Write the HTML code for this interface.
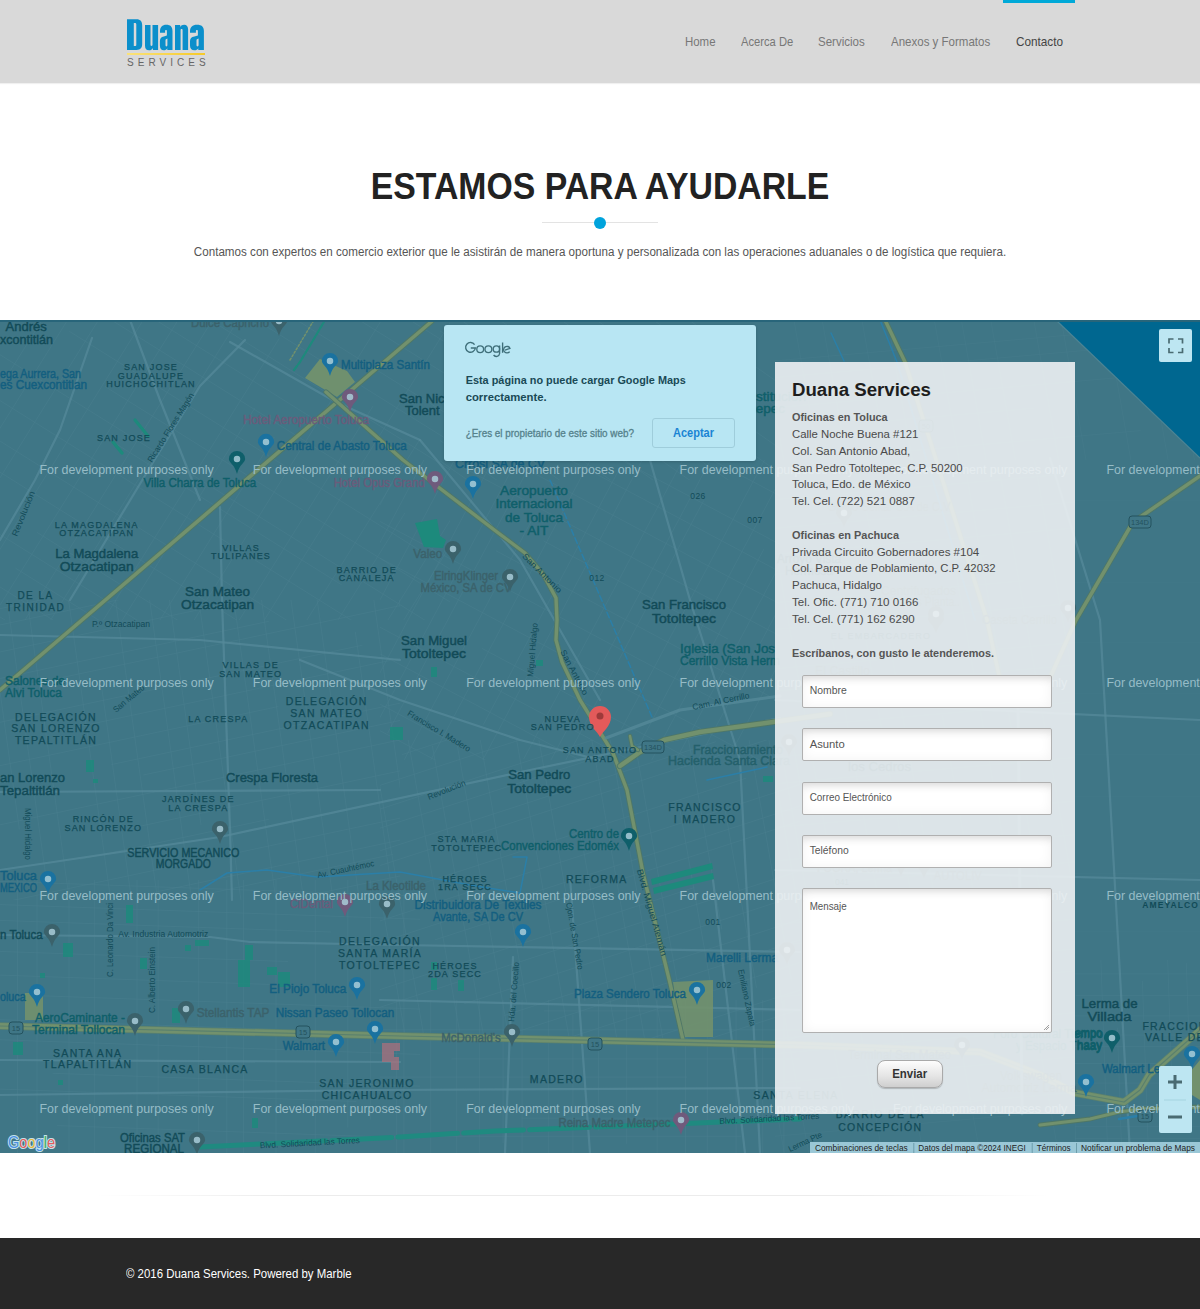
<!DOCTYPE html>
<html><head><meta charset="utf-8">
<style>
*{margin:0;padding:0;box-sizing:border-box}
html,body{width:1200px;height:1309px;overflow:hidden;background:#fff;font-family:"Liberation Sans",sans-serif}
.a{position:absolute;white-space:nowrap}
#hdr{position:absolute;left:0;top:0;width:1200px;height:83px;background:#d9d9d9;box-shadow:0 1px 1px rgba(0,0,0,.06)}
#accent{position:absolute;left:1003px;top:0;width:72px;height:3px;background:#00a9d8}
.logo-line{position:absolute;left:127px;top:53px;width:78px;height:2px;background:linear-gradient(90deg,#fae27a,#f6c928)}
.logo-s{left:127px;top:56.5px;font-size:10px;letter-spacing:4.05px;color:#666}
.nav{top:34px;font-size:13px;color:#777;transform-origin:left top}
#title{left:0;width:1200px;top:166px;transform:scaleX(.938);text-align:center;font-weight:bold;font-size:36px;color:#222}
#sep{position:absolute;left:542px;top:222px;width:116px;height:1px;background:#e3e3e3}
#dot{position:absolute;left:594px;top:217px;width:12px;height:12px;border-radius:50%;background:#00a3dc}
#sub{left:0;width:1200px;top:244.5px;transform:scaleX(.930);text-align:center;font-size:12.5px;color:#555}
#map{position:absolute;left:0;top:320px;width:1200px;height:833px;overflow:hidden}
#dlg{position:absolute;left:444px;top:325px;width:312px;height:136px;background:#b8e6f3;border-radius:3px;box-shadow:0 1px 3px rgba(0,0,0,.15)}
#panel{position:absolute;left:775px;top:362px;width:300px;height:752px;background:rgba(237,241,243,.9)}
.inp{position:absolute;left:802px;width:250px;height:33px;border:1px solid #b0b0b0;border-radius:2px;background:#fff;box-shadow:inset 0 9px 9px -7px rgba(0,0,0,.13),inset 0 0 12px rgba(0,0,0,.05)}
#btn{position:absolute;left:877px;top:1060px;width:66px;height:28px;border-radius:8px;border:1px solid #a9a9a9;background:linear-gradient(#fdfdfd,#e4e4e4 60%,#cfcfcf);box-shadow:0 1px 1px rgba(0,0,0,.2)}
#fs{position:absolute;left:1159px;top:329px;width:33px;height:33px;background:#bde6f2;border-radius:2px}
#zoom{position:absolute;left:1159px;top:1066px;width:33px;height:67px;background:#bde6f2;border-radius:2px}
#attr{position:absolute;left:810px;top:1142px;width:390px;height:11px;background:rgba(170,214,228,.85)}
#footer{position:absolute;left:0;top:1238px;width:1200px;height:71px;background:#282828}
#copy{left:125.5px;top:1266px;font-size:13px;color:#fff;transform:scaleX(.879);transform-origin:left top}
#hr{position:absolute;left:95px;top:1195px;width:955px;height:1px;background:linear-gradient(90deg,rgba(235,235,235,0),#ececec 20%,#ececec 80%,rgba(235,235,235,0))}
svg text{font-family:"Liberation Sans",sans-serif}
</style></head><body>
<div id="hdr"></div>
<div id="accent"></div>
<svg style="position:absolute;left:0;top:0" width="220" height="70" viewBox="0 0 220 70">
<g fill="#0b8fcb">
<path d="M127 19.2h9.5c4 0 5.7 2.2 5.7 6.2v18.4c0 4-1.7 6.2-5.7 6.2H127z M133.8 23v23h1.2c1 0 1.3-.6 1.3-1.6V24.6c0-1-.3-1.6-1.3-1.6z" fill-rule="evenodd"/>
<path d="M145 25h5.5v19.5c0 1 .3 1.4 1 1.4s1-.4 1-1.4V25h5.6v25h-5.2v-2c-.8 1.5-2.2 2.3-3.800 2.3-2.6 0-4.1-1.7-4.1-4.600z"/>
<path d="M160 31.5c0-4.6 2.2-6.8 6.3-6.8s6.2 2 6.2 6.3V50h-5.2v-1.8c-.8 1.4-2 2.1-3.5 2.1-2.6 0-3.9-1.8-3.9-4.8v-4.3c0-2.8 1.2-4.2 3.9-4.8l3.1-.8v-4.4c0-.9-.3-1.3-.9-1.3s-.9.4-.9 1.3v1.6H160z M167.4 38.5l-1 .4c-.7.3-.9.7-.9 1.6v4.6c0 .9.3 1.3.9 1.3s1-.4 1-1.3z" fill-rule="evenodd"/>
<path d="M175 25h5.2v2c.8-1.5 2.2-2.3 3.9-2.3 2.6 0 4 1.7 4 4.6V50h-5.5V30.5c0-1-.3-1.4-1-1.4s-1 .4-1 1.4V50H175z"/>
<path d="M190 31.5c0-4.6 2.4-6.8 7-6.8s6.9 2 6.9 6.3V50h-5.6v-1.8c-.9 1.4-2.200 2.1-3.9 2.1-2.9 0-4.4-1.8-4.4-4.8v-4.3c0-2.8 1.3-4.2 4.4-4.8l3.5-.8v-4.4c0-.9-.3-1.3-1-1.3s-1 .4-1 1.3v1.6H190z M198.600 38.5l-1.1.4c-.8.3-1 .7-1 1.6v4.6c0 .9.3 1.3 1 1.3s1.1-.4 1.1-1.3z" fill-rule="evenodd"/>
</g></svg>
<div class="logo-line"></div>
<div class="a logo-s">SERVICES</div>
<div class="a nav" style="left:684.5px;transform:scaleX(.88)">Home</div>
<div class="a nav" style="left:741px;transform:scaleX(.86)">Acerca De</div>
<div class="a nav" style="left:818.3px;transform:scaleX(.887)">Servicios</div>
<div class="a nav" style="left:891px;transform:scaleX(.886)">Anexos y Formatos</div>
<div class="a nav" style="left:1015.5px;color:#444;transform:scaleX(.904)">Contacto</div>
<div class="a" id="title">ESTAMOS PARA AYUDARLE</div>
<div id="sep"></div><div id="dot"></div>
<div class="a" id="sub">Contamos con expertos en comercio exterior que le asistirán de manera oportuna y personalizada con las operaciones aduanales o de logística que requiera.</div>
<div id="map"><svg width="1200" height="833" viewBox="0 320 1200 833" style="position:absolute;left:0;top:0">
<rect x="0" y="320" width="1200" height="833" fill="#3f7686"/>
<clipPath id="c2"><rect x="0" y="320" width="450" height="300"/></clipPath><g clip-path="url(#c2)">
<line x1="259.9" y1="169.7" x2="513.9" y2="328.4" stroke="#4a7f8f" stroke-width="1" opacity="0.55"/>
<line x1="219.4" y1="175.8" x2="481.1" y2="339.3" stroke="#4a7f8f" stroke-width="1" opacity="0.55"/>
<line x1="192.9" y1="184.4" x2="573.6" y2="422.4" stroke="#4a7f8f" stroke-width="1" opacity="0.55"/>
<line x1="215.9" y1="230.5" x2="559.4" y2="445.1" stroke="#4a7f8f" stroke-width="1" opacity="0.55"/>
<line x1="262.3" y1="298.5" x2="515.9" y2="457.0" stroke="#4a7f8f" stroke-width="1" opacity="0.55"/>
<line x1="93.4" y1="218.3" x2="496.7" y2="470.4" stroke="#4a7f8f" stroke-width="1" opacity="0.55"/>
<line x1="58.9" y1="225.4" x2="517.6" y2="512.0" stroke="#4a7f8f" stroke-width="1" opacity="0.55"/>
<line x1="43.6" y1="250.0" x2="329.7" y2="428.8" stroke="#4a7f8f" stroke-width="1" opacity="0.55"/>
<line x1="31.2" y1="269.9" x2="364.0" y2="477.9" stroke="#4a7f8f" stroke-width="1" opacity="0.55"/>
<line x1="69.3" y1="331.3" x2="472.9" y2="583.5" stroke="#4a7f8f" stroke-width="1" opacity="0.55"/>
<line x1="104.9" y1="386.4" x2="458.2" y2="607.1" stroke="#4a7f8f" stroke-width="1" opacity="0.55"/>
<line x1="-15.7" y1="344.9" x2="439.3" y2="629.2" stroke="#4a7f8f" stroke-width="1" opacity="0.55"/>
<line x1="115.7" y1="443.7" x2="341.7" y2="584.9" stroke="#4a7f8f" stroke-width="1" opacity="0.55"/>
<line x1="-36.3" y1="377.9" x2="422.3" y2="664.5" stroke="#4a7f8f" stroke-width="1" opacity="0.55"/>
<line x1="-54.5" y1="407.0" x2="348.2" y2="658.7" stroke="#4a7f8f" stroke-width="1" opacity="0.55"/>
<line x1="-68.5" y1="429.4" x2="360.8" y2="697.6" stroke="#4a7f8f" stroke-width="1" opacity="0.55"/>
<line x1="36.7" y1="532.2" x2="318.7" y2="708.4" stroke="#4a7f8f" stroke-width="1" opacity="0.55"/>
<line x1="-96.5" y1="474.2" x2="362.2" y2="760.8" stroke="#4a7f8f" stroke-width="1" opacity="0.55"/>
<line x1="15.4" y1="568.1" x2="252.6" y2="716.3" stroke="#4a7f8f" stroke-width="1" opacity="0.55"/>
<line x1="-109.2" y1="518.7" x2="338.6" y2="798.5" stroke="#4a7f8f" stroke-width="1" opacity="0.55"/>
<line x1="-61.8" y1="578.3" x2="325.1" y2="820.1" stroke="#4a7f8f" stroke-width="1" opacity="0.55"/>
</g>
<clipPath id="c25"><rect x="0" y="320" width="450" height="300"/></clipPath><g clip-path="url(#c25)">
<line x1="-91.0" y1="451.2" x2="132.6" y2="93.4" stroke="#4a7f8f" stroke-width="1" opacity="0.55"/>
<line x1="-117.3" y1="575.0" x2="102.3" y2="223.6" stroke="#4a7f8f" stroke-width="1" opacity="0.55"/>
<line x1="-98.9" y1="586.5" x2="187.7" y2="127.8" stroke="#4a7f8f" stroke-width="1" opacity="0.55"/>
<line x1="-50.0" y1="557.8" x2="150.9" y2="236.2" stroke="#4a7f8f" stroke-width="1" opacity="0.55"/>
<line x1="-44.0" y1="619.7" x2="169.8" y2="277.5" stroke="#4a7f8f" stroke-width="1" opacity="0.55"/>
<line x1="-19.4" y1="636.1" x2="267.2" y2="177.5" stroke="#4a7f8f" stroke-width="1" opacity="0.55"/>
<line x1="5.3" y1="651.6" x2="291.9" y2="192.9" stroke="#4a7f8f" stroke-width="1" opacity="0.55"/>
<line x1="23.7" y1="663.1" x2="310.3" y2="204.4" stroke="#4a7f8f" stroke-width="1" opacity="0.55"/>
<line x1="61.6" y1="686.8" x2="279.3" y2="338.4" stroke="#4a7f8f" stroke-width="1" opacity="0.55"/>
<line x1="75.3" y1="695.3" x2="255.0" y2="407.8" stroke="#4a7f8f" stroke-width="1" opacity="0.55"/>
<line x1="141.3" y1="649.8" x2="274.3" y2="437.0" stroke="#4a7f8f" stroke-width="1" opacity="0.55"/>
<line x1="168.6" y1="660.9" x2="399.1" y2="292.0" stroke="#4a7f8f" stroke-width="1" opacity="0.55"/>
<line x1="188.3" y1="701.6" x2="373.1" y2="405.9" stroke="#4a7f8f" stroke-width="1" opacity="0.55"/>
<line x1="177.4" y1="759.1" x2="464.0" y2="300.4" stroke="#4a7f8f" stroke-width="1" opacity="0.55"/>
<line x1="217.9" y1="762.5" x2="419.3" y2="440.2" stroke="#4a7f8f" stroke-width="1" opacity="0.55"/>
<line x1="230.4" y1="792.2" x2="405.0" y2="512.8" stroke="#4a7f8f" stroke-width="1" opacity="0.55"/>
<line x1="266.3" y1="814.7" x2="500.5" y2="439.8" stroke="#4a7f8f" stroke-width="1" opacity="0.55"/>
<line x1="277.7" y1="821.8" x2="564.3" y2="363.1" stroke="#4a7f8f" stroke-width="1" opacity="0.55"/>
<line x1="315.9" y1="845.6" x2="529.9" y2="503.2" stroke="#4a7f8f" stroke-width="1" opacity="0.55"/>
</g>
<clipPath id="c46"><rect x="0" y="600" width="400" height="300"/></clipPath><g clip-path="url(#c46)">
<line x1="-97.4" y1="553.1" x2="391.6" y2="449.2" stroke="#4a7f8f" stroke-width="1" opacity="0.55"/>
<line x1="-47.5" y1="573.3" x2="397.9" y2="478.6" stroke="#4a7f8f" stroke-width="1" opacity="0.55"/>
<line x1="-86.0" y1="606.7" x2="403.0" y2="502.8" stroke="#4a7f8f" stroke-width="1" opacity="0.55"/>
<line x1="-81.9" y1="626.1" x2="312.8" y2="542.2" stroke="#4a7f8f" stroke-width="1" opacity="0.55"/>
<line x1="-73.1" y1="640.5" x2="265.5" y2="568.5" stroke="#4a7f8f" stroke-width="1" opacity="0.55"/>
<line x1="-73.1" y1="667.5" x2="403.6" y2="566.2" stroke="#4a7f8f" stroke-width="1" opacity="0.55"/>
<line x1="-67.7" y1="692.9" x2="268.8" y2="621.3" stroke="#4a7f8f" stroke-width="1" opacity="0.55"/>
<line x1="-25.3" y1="696.1" x2="423.8" y2="600.6" stroke="#4a7f8f" stroke-width="1" opacity="0.55"/>
<line x1="-58.8" y1="734.8" x2="362.4" y2="645.2" stroke="#4a7f8f" stroke-width="1" opacity="0.55"/>
<line x1="74.7" y1="727.5" x2="434.5" y2="651.0" stroke="#4a7f8f" stroke-width="1" opacity="0.55"/>
<line x1="-50.0" y1="776.3" x2="278.4" y2="706.5" stroke="#4a7f8f" stroke-width="1" opacity="0.55"/>
<line x1="111.3" y1="764.6" x2="443.7" y2="693.9" stroke="#4a7f8f" stroke-width="1" opacity="0.55"/>
<line x1="143.3" y1="775.0" x2="447.2" y2="710.4" stroke="#4a7f8f" stroke-width="1" opacity="0.55"/>
<line x1="-8.4" y1="826.6" x2="451.1" y2="729.0" stroke="#4a7f8f" stroke-width="1" opacity="0.55"/>
<line x1="130.1" y1="828.3" x2="457.4" y2="758.7" stroke="#4a7f8f" stroke-width="1" opacity="0.55"/>
<line x1="79.9" y1="859.4" x2="268.8" y2="819.3" stroke="#4a7f8f" stroke-width="1" opacity="0.55"/>
<line x1="-22.0" y1="907.8" x2="467.0" y2="803.9" stroke="#4a7f8f" stroke-width="1" opacity="0.55"/>
<line x1="153.0" y1="892.6" x2="471.5" y2="824.9" stroke="#4a7f8f" stroke-width="1" opacity="0.55"/>
<line x1="42.3" y1="928.9" x2="393.2" y2="854.3" stroke="#4a7f8f" stroke-width="1" opacity="0.55"/>
<line x1="15.4" y1="957.7" x2="478.8" y2="859.2" stroke="#4a7f8f" stroke-width="1" opacity="0.55"/>
<line x1="108.7" y1="961.7" x2="483.6" y2="882.0" stroke="#4a7f8f" stroke-width="1" opacity="0.55"/>
<line x1="-0.7" y1="1008.3" x2="488.4" y2="904.4" stroke="#4a7f8f" stroke-width="1" opacity="0.55"/>
<line x1="4.2" y1="1031.3" x2="383.7" y2="950.6" stroke="#4a7f8f" stroke-width="1" opacity="0.55"/>
</g>
<clipPath id="c71"><rect x="0" y="600" width="400" height="300"/></clipPath><g clip-path="url(#c71)">
<line x1="440.3" y1="625.2" x2="473.0" y2="857.8" stroke="#4a7f8f" stroke-width="1" opacity="0.55"/>
<line x1="381.3" y1="472.1" x2="437.5" y2="871.8" stroke="#4a7f8f" stroke-width="1" opacity="0.55"/>
<line x1="356.4" y1="475.6" x2="413.7" y2="883.6" stroke="#4a7f8f" stroke-width="1" opacity="0.55"/>
<line x1="355.3" y1="631.7" x2="403.4" y2="973.9" stroke="#4a7f8f" stroke-width="1" opacity="0.55"/>
<line x1="300.8" y1="483.4" x2="370.4" y2="978.5" stroke="#4a7f8f" stroke-width="1" opacity="0.55"/>
<line x1="275.1" y1="487.0" x2="344.7" y2="982.1" stroke="#4a7f8f" stroke-width="1" opacity="0.55"/>
<line x1="246.2" y1="491.0" x2="302.8" y2="893.7" stroke="#4a7f8f" stroke-width="1" opacity="0.55"/>
<line x1="219.0" y1="494.9" x2="288.6" y2="990.0" stroke="#4a7f8f" stroke-width="1" opacity="0.55"/>
<line x1="184.7" y1="499.7" x2="242.0" y2="907.6" stroke="#4a7f8f" stroke-width="1" opacity="0.55"/>
<line x1="155.9" y1="503.7" x2="201.0" y2="824.9" stroke="#4a7f8f" stroke-width="1" opacity="0.55"/>
<line x1="143.2" y1="554.1" x2="196.8" y2="936.1" stroke="#4a7f8f" stroke-width="1" opacity="0.55"/>
<line x1="103.0" y1="511.2" x2="164.7" y2="950.1" stroke="#4a7f8f" stroke-width="1" opacity="0.55"/>
<line x1="102.0" y1="689.6" x2="147.0" y2="1009.9" stroke="#4a7f8f" stroke-width="1" opacity="0.55"/>
<line x1="57.0" y1="517.6" x2="112.3" y2="911.2" stroke="#4a7f8f" stroke-width="1" opacity="0.55"/>
<line x1="16.4" y1="523.3" x2="70.2" y2="905.9" stroke="#4a7f8f" stroke-width="1" opacity="0.55"/>
<line x1="2.1" y1="564.9" x2="58.5" y2="966.2" stroke="#4a7f8f" stroke-width="1" opacity="0.55"/>
<line x1="-22.9" y1="528.9" x2="19.4" y2="829.5" stroke="#4a7f8f" stroke-width="1" opacity="0.55"/>
<line x1="-55.8" y1="533.5" x2="13.8" y2="1028.6" stroke="#4a7f8f" stroke-width="1" opacity="0.55"/>
</g>
<clipPath id="c91"><rect x="0" y="880" width="420" height="273"/></clipPath><g clip-path="url(#c91)">
<line x1="-31.4" y1="751.2" x2="469.3" y2="768.7" stroke="#4a7f8f" stroke-width="1" opacity="0.55"/>
<line x1="20.5" y1="790.1" x2="423.7" y2="804.2" stroke="#4a7f8f" stroke-width="1" opacity="0.55"/>
<line x1="51.4" y1="805.1" x2="467.5" y2="819.6" stroke="#4a7f8f" stroke-width="1" opacity="0.55"/>
<line x1="-4.3" y1="835.0" x2="466.4" y2="851.5" stroke="#4a7f8f" stroke-width="1" opacity="0.55"/>
<line x1="-35.0" y1="854.4" x2="276.9" y2="865.3" stroke="#4a7f8f" stroke-width="1" opacity="0.55"/>
<line x1="-21.4" y1="880.6" x2="464.8" y2="897.6" stroke="#4a7f8f" stroke-width="1" opacity="0.55"/>
<line x1="-36.7" y1="903.3" x2="435.2" y2="919.8" stroke="#4a7f8f" stroke-width="1" opacity="0.55"/>
<line x1="-37.2" y1="919.1" x2="331.1" y2="932.0" stroke="#4a7f8f" stroke-width="1" opacity="0.55"/>
<line x1="-38.3" y1="950.1" x2="288.0" y2="961.5" stroke="#4a7f8f" stroke-width="1" opacity="0.55"/>
<line x1="-17.2" y1="974.5" x2="271.3" y2="984.5" stroke="#4a7f8f" stroke-width="1" opacity="0.55"/>
<line x1="21.3" y1="995.1" x2="460.8" y2="1010.5" stroke="#4a7f8f" stroke-width="1" opacity="0.55"/>
<line x1="-40.7" y1="1018.3" x2="329.2" y2="1031.2" stroke="#4a7f8f" stroke-width="1" opacity="0.55"/>
<line x1="-38.3" y1="1038.4" x2="459.2" y2="1055.8" stroke="#4a7f8f" stroke-width="1" opacity="0.55"/>
<line x1="52.6" y1="1073.3" x2="458.1" y2="1087.5" stroke="#4a7f8f" stroke-width="1" opacity="0.55"/>
<line x1="-43.1" y1="1087.6" x2="356.4" y2="1101.5" stroke="#4a7f8f" stroke-width="1" opacity="0.55"/>
<line x1="57.2" y1="1125.6" x2="456.3" y2="1139.5" stroke="#4a7f8f" stroke-width="1" opacity="0.55"/>
<line x1="121.5" y1="1154.0" x2="455.4" y2="1165.6" stroke="#4a7f8f" stroke-width="1" opacity="0.55"/>
<line x1="23.7" y1="1169.6" x2="280.5" y2="1178.6" stroke="#4a7f8f" stroke-width="1" opacity="0.55"/>
<line x1="-46.4" y1="1183.0" x2="286.6" y2="1194.6" stroke="#4a7f8f" stroke-width="1" opacity="0.55"/>
<line x1="-47.3" y1="1207.2" x2="453.3" y2="1224.7" stroke="#4a7f8f" stroke-width="1" opacity="0.55"/>
<line x1="0.1" y1="1241.3" x2="344.0" y2="1253.3" stroke="#4a7f8f" stroke-width="1" opacity="0.55"/>
</g>
<clipPath id="c114"><rect x="0" y="880" width="420" height="273"/></clipPath><g clip-path="url(#c114)">
<line x1="466.6" y1="818.8" x2="466.6" y2="1267.0" stroke="#4a7f8f" stroke-width="1" opacity="0.55"/>
<line x1="422.0" y1="766.0" x2="422.0" y2="1260.1" stroke="#4a7f8f" stroke-width="1" opacity="0.55"/>
<line x1="403.9" y1="766.3" x2="403.9" y2="1161.7" stroke="#4a7f8f" stroke-width="1" opacity="0.55"/>
<line x1="370.4" y1="867.2" x2="370.4" y2="1119.5" stroke="#4a7f8f" stroke-width="1" opacity="0.55"/>
<line x1="347.8" y1="774.4" x2="347.8" y2="1127.6" stroke="#4a7f8f" stroke-width="1" opacity="0.55"/>
<line x1="315.3" y1="766.0" x2="315.3" y2="1267.0" stroke="#4a7f8f" stroke-width="1" opacity="0.55"/>
<line x1="276.0" y1="766.0" x2="276.0" y2="1267.0" stroke="#4a7f8f" stroke-width="1" opacity="0.55"/>
<line x1="243.6" y1="831.4" x2="243.6" y2="1267.0" stroke="#4a7f8f" stroke-width="1" opacity="0.55"/>
<line x1="226.8" y1="766.0" x2="226.8" y2="1267.0" stroke="#4a7f8f" stroke-width="1" opacity="0.55"/>
<line x1="198.7" y1="766.0" x2="198.7" y2="1267.0" stroke="#4a7f8f" stroke-width="1" opacity="0.55"/>
<line x1="158.2" y1="766.0" x2="158.2" y2="1267.0" stroke="#4a7f8f" stroke-width="1" opacity="0.55"/>
<line x1="137.0" y1="766.0" x2="137.0" y2="1267.0" stroke="#4a7f8f" stroke-width="1" opacity="0.55"/>
<line x1="94.4" y1="766.0" x2="94.4" y2="1267.0" stroke="#4a7f8f" stroke-width="1" opacity="0.55"/>
<line x1="69.0" y1="766.0" x2="69.0" y2="1267.0" stroke="#4a7f8f" stroke-width="1" opacity="0.55"/>
<line x1="37.0" y1="772.3" x2="37.0" y2="1138.9" stroke="#4a7f8f" stroke-width="1" opacity="0.55"/>
<line x1="17.6" y1="766.0" x2="17.6" y2="1267.0" stroke="#4a7f8f" stroke-width="1" opacity="0.55"/>
<line x1="-21.8" y1="766.0" x2="-21.8" y2="1267.0" stroke="#4a7f8f" stroke-width="1" opacity="0.55"/>
</g>
<clipPath id="c133"><rect x="380" y="460" width="400" height="300"/></clipPath><g clip-path="url(#c133)">
<line x1="316.7" y1="572.4" x2="476.5" y2="271.8" stroke="#4a7f8f" stroke-width="1" opacity="0.55"/>
<line x1="263.1" y1="724.7" x2="497.9" y2="283.2" stroke="#4a7f8f" stroke-width="1" opacity="0.55"/>
<line x1="278.8" y1="733.0" x2="426.6" y2="454.9" stroke="#4a7f8f" stroke-width="1" opacity="0.55"/>
<line x1="302.5" y1="745.6" x2="512.8" y2="350.1" stroke="#4a7f8f" stroke-width="1" opacity="0.55"/>
<line x1="368.6" y1="694.1" x2="537.7" y2="376.0" stroke="#4a7f8f" stroke-width="1" opacity="0.55"/>
<line x1="351.2" y1="771.5" x2="586.0" y2="330.0" stroke="#4a7f8f" stroke-width="1" opacity="0.55"/>
<line x1="387.5" y1="733.3" x2="598.4" y2="336.6" stroke="#4a7f8f" stroke-width="1" opacity="0.55"/>
<line x1="387.7" y1="790.9" x2="534.3" y2="515.3" stroke="#4a7f8f" stroke-width="1" opacity="0.55"/>
<line x1="408.5" y1="801.9" x2="643.2" y2="360.5" stroke="#4a7f8f" stroke-width="1" opacity="0.55"/>
<line x1="483.3" y1="724.7" x2="619.5" y2="468.7" stroke="#4a7f8f" stroke-width="1" opacity="0.55"/>
<line x1="449.0" y1="823.5" x2="681.6" y2="385.9" stroke="#4a7f8f" stroke-width="1" opacity="0.55"/>
<line x1="523.6" y1="759.2" x2="715.3" y2="398.8" stroke="#4a7f8f" stroke-width="1" opacity="0.55"/>
<line x1="527.4" y1="804.3" x2="731.8" y2="419.9" stroke="#4a7f8f" stroke-width="1" opacity="0.55"/>
<line x1="513.7" y1="857.9" x2="703.7" y2="500.5" stroke="#4a7f8f" stroke-width="1" opacity="0.55"/>
<line x1="621.3" y1="729.3" x2="779.1" y2="432.7" stroke="#4a7f8f" stroke-width="1" opacity="0.55"/>
<line x1="564.7" y1="885.0" x2="789.8" y2="461.6" stroke="#4a7f8f" stroke-width="1" opacity="0.55"/>
<line x1="581.1" y1="892.9" x2="763.9" y2="549.1" stroke="#4a7f8f" stroke-width="1" opacity="0.55"/>
<line x1="631.9" y1="842.8" x2="819.4" y2="490.3" stroke="#4a7f8f" stroke-width="1" opacity="0.55"/>
<line x1="617.0" y1="912.8" x2="851.7" y2="471.3" stroke="#4a7f8f" stroke-width="1" opacity="0.55"/>
<line x1="639.7" y1="924.9" x2="874.4" y2="483.4" stroke="#4a7f8f" stroke-width="1" opacity="0.55"/>
<line x1="705.8" y1="875.7" x2="905.4" y2="500.2" stroke="#4a7f8f" stroke-width="1" opacity="0.55"/>
</g>
<clipPath id="c156"><rect x="380" y="460" width="400" height="300"/></clipPath><g clip-path="url(#c156)">
<line x1="551.5" y1="313.5" x2="749.3" y2="418.7" stroke="#4a7f8f" stroke-width="1" opacity="0.55"/>
<line x1="465.9" y1="292.1" x2="896.0" y2="520.7" stroke="#4a7f8f" stroke-width="1" opacity="0.55"/>
<line x1="540.8" y1="368.9" x2="781.4" y2="496.8" stroke="#4a7f8f" stroke-width="1" opacity="0.55"/>
<line x1="430.5" y1="358.6" x2="872.0" y2="593.3" stroke="#4a7f8f" stroke-width="1" opacity="0.55"/>
<line x1="419.2" y1="379.9" x2="860.7" y2="614.7" stroke="#4a7f8f" stroke-width="1" opacity="0.55"/>
<line x1="405.8" y1="405.1" x2="800.0" y2="614.7" stroke="#4a7f8f" stroke-width="1" opacity="0.55"/>
<line x1="392.5" y1="430.0" x2="834.0" y2="664.8" stroke="#4a7f8f" stroke-width="1" opacity="0.55"/>
<line x1="543.5" y1="540.9" x2="728.1" y2="639.1" stroke="#4a7f8f" stroke-width="1" opacity="0.55"/>
<line x1="495.8" y1="550.7" x2="806.8" y2="716.1" stroke="#4a7f8f" stroke-width="1" opacity="0.55"/>
<line x1="351.9" y1="506.5" x2="715.2" y2="699.7" stroke="#4a7f8f" stroke-width="1" opacity="0.55"/>
<line x1="365.2" y1="550.3" x2="761.5" y2="761.0" stroke="#4a7f8f" stroke-width="1" opacity="0.55"/>
<line x1="481.8" y1="648.3" x2="763.2" y2="798.0" stroke="#4a7f8f" stroke-width="1" opacity="0.55"/>
<line x1="342.0" y1="607.0" x2="633.3" y2="761.9" stroke="#4a7f8f" stroke-width="1" opacity="0.55"/>
<line x1="342.6" y1="634.0" x2="738.5" y2="844.5" stroke="#4a7f8f" stroke-width="1" opacity="0.55"/>
<line x1="276.2" y1="648.9" x2="614.2" y2="828.6" stroke="#4a7f8f" stroke-width="1" opacity="0.55"/>
<line x1="324.9" y1="701.4" x2="579.1" y2="836.5" stroke="#4a7f8f" stroke-width="1" opacity="0.55"/>
<line x1="336.2" y1="750.4" x2="688.8" y2="937.9" stroke="#4a7f8f" stroke-width="1" opacity="0.55"/>
</g>
<clipPath id="c175"><rect x="380" y="740" width="420" height="300"/></clipPath><g clip-path="url(#c175)">
<line x1="319.5" y1="711.6" x2="639.3" y2="607.7" stroke="#4a7f8f" stroke-width="1" opacity="0.55"/>
<line x1="271.4" y1="744.6" x2="762.3" y2="585.1" stroke="#4a7f8f" stroke-width="1" opacity="0.55"/>
<line x1="286.3" y1="768.8" x2="770.8" y2="611.3" stroke="#4a7f8f" stroke-width="1" opacity="0.55"/>
<line x1="402.1" y1="754.6" x2="658.2" y2="671.4" stroke="#4a7f8f" stroke-width="1" opacity="0.55"/>
<line x1="293.7" y1="813.4" x2="784.6" y2="653.9" stroke="#4a7f8f" stroke-width="1" opacity="0.55"/>
<line x1="322.1" y1="827.9" x2="697.8" y2="705.8" stroke="#4a7f8f" stroke-width="1" opacity="0.55"/>
<line x1="306.3" y1="852.1" x2="797.2" y2="692.6" stroke="#4a7f8f" stroke-width="1" opacity="0.55"/>
<line x1="313.0" y1="872.6" x2="715.8" y2="741.7" stroke="#4a7f8f" stroke-width="1" opacity="0.55"/>
<line x1="317.3" y1="885.9" x2="792.5" y2="731.5" stroke="#4a7f8f" stroke-width="1" opacity="0.55"/>
<line x1="351.7" y1="906.3" x2="746.1" y2="778.2" stroke="#4a7f8f" stroke-width="1" opacity="0.55"/>
<line x1="347.4" y1="931.5" x2="824.5" y2="776.5" stroke="#4a7f8f" stroke-width="1" opacity="0.55"/>
<line x1="383.8" y1="941.2" x2="830.8" y2="796.0" stroke="#4a7f8f" stroke-width="1" opacity="0.55"/>
<line x1="434.9" y1="939.9" x2="835.3" y2="809.7" stroke="#4a7f8f" stroke-width="1" opacity="0.55"/>
<line x1="353.8" y1="998.1" x2="694.4" y2="887.5" stroke="#4a7f8f" stroke-width="1" opacity="0.55"/>
<line x1="359.0" y1="1014.1" x2="849.8" y2="854.6" stroke="#4a7f8f" stroke-width="1" opacity="0.55"/>
<line x1="463.8" y1="1003.9" x2="856.9" y2="876.2" stroke="#4a7f8f" stroke-width="1" opacity="0.55"/>
<line x1="504.3" y1="1015.5" x2="864.1" y2="898.6" stroke="#4a7f8f" stroke-width="1" opacity="0.55"/>
<line x1="445.6" y1="1055.0" x2="807.8" y2="937.3" stroke="#4a7f8f" stroke-width="1" opacity="0.55"/>
<line x1="386.0" y1="1097.1" x2="876.8" y2="937.6" stroke="#4a7f8f" stroke-width="1" opacity="0.55"/>
<line x1="584.4" y1="1060.0" x2="849.5" y2="973.9" stroke="#4a7f8f" stroke-width="1" opacity="0.55"/>
<line x1="549.0" y1="1090.9" x2="881.1" y2="983.0" stroke="#4a7f8f" stroke-width="1" opacity="0.55"/>
<line x1="451.4" y1="1149.4" x2="832.7" y2="1025.5" stroke="#4a7f8f" stroke-width="1" opacity="0.55"/>
<line x1="493.5" y1="1165.2" x2="902.0" y2="1032.4" stroke="#4a7f8f" stroke-width="1" opacity="0.55"/>
<line x1="431.5" y1="1197.2" x2="890.6" y2="1048.0" stroke="#4a7f8f" stroke-width="1" opacity="0.55"/>
</g>
<clipPath id="c201"><rect x="380" y="740" width="420" height="300"/></clipPath><g clip-path="url(#c201)">
<line x1="793.4" y1="592.1" x2="883.1" y2="1100.4" stroke="#4a7f8f" stroke-width="1" opacity="0.55"/>
<line x1="773.8" y1="634.4" x2="856.7" y2="1105.0" stroke="#4a7f8f" stroke-width="1" opacity="0.55"/>
<line x1="768.2" y1="735.8" x2="811.5" y2="981.7" stroke="#4a7f8f" stroke-width="1" opacity="0.55"/>
<line x1="725.2" y1="604.7" x2="791.5" y2="980.6" stroke="#4a7f8f" stroke-width="1" opacity="0.55"/>
<line x1="724.5" y1="806.4" x2="756.5" y2="987.8" stroke="#4a7f8f" stroke-width="1" opacity="0.55"/>
<line x1="666.4" y1="614.5" x2="721.9" y2="929.5" stroke="#4a7f8f" stroke-width="1" opacity="0.55"/>
<line x1="679.1" y1="805.0" x2="712.9" y2="997.1" stroke="#4a7f8f" stroke-width="1" opacity="0.55"/>
<line x1="628.7" y1="707.2" x2="703.6" y2="1132.0" stroke="#4a7f8f" stroke-width="1" opacity="0.55"/>
<line x1="591.6" y1="635.0" x2="677.2" y2="1119.9" stroke="#4a7f8f" stroke-width="1" opacity="0.55"/>
<line x1="572.6" y1="631.0" x2="662.3" y2="1139.3" stroke="#4a7f8f" stroke-width="1" opacity="0.55"/>
<line x1="580.1" y1="830.5" x2="635.4" y2="1144.0" stroke="#4a7f8f" stroke-width="1" opacity="0.55"/>
<line x1="521.3" y1="640.1" x2="585.0" y2="1001.1" stroke="#4a7f8f" stroke-width="1" opacity="0.55"/>
<line x1="499.7" y1="643.9" x2="589.3" y2="1152.2" stroke="#4a7f8f" stroke-width="1" opacity="0.55"/>
<line x1="464.4" y1="650.1" x2="526.6" y2="1002.6" stroke="#4a7f8f" stroke-width="1" opacity="0.55"/>
<line x1="441.2" y1="654.2" x2="530.9" y2="1162.5" stroke="#4a7f8f" stroke-width="1" opacity="0.55"/>
<line x1="432.4" y1="745.9" x2="504.1" y2="1152.1" stroke="#4a7f8f" stroke-width="1" opacity="0.55"/>
<line x1="394.5" y1="662.4" x2="484.2" y2="1170.7" stroke="#4a7f8f" stroke-width="1" opacity="0.55"/>
<line x1="359.1" y1="668.7" x2="448.7" y2="1177.0" stroke="#4a7f8f" stroke-width="1" opacity="0.55"/>
<line x1="354.1" y1="745.4" x2="430.7" y2="1180.1" stroke="#4a7f8f" stroke-width="1" opacity="0.55"/>
<line x1="346.3" y1="828.8" x2="375.4" y2="993.8" stroke="#4a7f8f" stroke-width="1" opacity="0.55"/>
</g>
<clipPath id="c223"><rect x="380" y="1000" width="420" height="153"/></clipPath><g clip-path="url(#c223)">
<line x1="366.5" y1="847.4" x2="810.0" y2="847.4" stroke="#4a7f8f" stroke-width="1" opacity="0.55"/>
<line x1="366.5" y1="877.6" x2="649.7" y2="877.6" stroke="#4a7f8f" stroke-width="1" opacity="0.55"/>
<line x1="493.4" y1="888.2" x2="676.6" y2="888.2" stroke="#4a7f8f" stroke-width="1" opacity="0.55"/>
<line x1="366.5" y1="912.0" x2="813.5" y2="912.0" stroke="#4a7f8f" stroke-width="1" opacity="0.55"/>
<line x1="366.5" y1="936.0" x2="813.5" y2="936.0" stroke="#4a7f8f" stroke-width="1" opacity="0.55"/>
<line x1="366.5" y1="948.5" x2="736.1" y2="948.5" stroke="#4a7f8f" stroke-width="1" opacity="0.55"/>
<line x1="366.5" y1="971.5" x2="678.9" y2="971.5" stroke="#4a7f8f" stroke-width="1" opacity="0.55"/>
<line x1="524.6" y1="989.9" x2="813.5" y2="989.9" stroke="#4a7f8f" stroke-width="1" opacity="0.55"/>
<line x1="543.9" y1="1010.9" x2="813.5" y2="1010.9" stroke="#4a7f8f" stroke-width="1" opacity="0.55"/>
<line x1="366.5" y1="1029.8" x2="813.5" y2="1029.8" stroke="#4a7f8f" stroke-width="1" opacity="0.55"/>
<line x1="451.4" y1="1058.9" x2="813.5" y2="1058.9" stroke="#4a7f8f" stroke-width="1" opacity="0.55"/>
<line x1="366.5" y1="1077.1" x2="687.2" y2="1077.1" stroke="#4a7f8f" stroke-width="1" opacity="0.55"/>
<line x1="540.5" y1="1088.4" x2="813.5" y2="1088.4" stroke="#4a7f8f" stroke-width="1" opacity="0.55"/>
<line x1="521.4" y1="1118.2" x2="681.2" y2="1118.2" stroke="#4a7f8f" stroke-width="1" opacity="0.55"/>
<line x1="366.5" y1="1136.3" x2="741.3" y2="1136.3" stroke="#4a7f8f" stroke-width="1" opacity="0.55"/>
<line x1="432.4" y1="1154.4" x2="671.2" y2="1154.4" stroke="#4a7f8f" stroke-width="1" opacity="0.55"/>
<line x1="366.5" y1="1170.1" x2="813.5" y2="1170.1" stroke="#4a7f8f" stroke-width="1" opacity="0.55"/>
<line x1="425.0" y1="1189.4" x2="813.5" y2="1189.4" stroke="#4a7f8f" stroke-width="1" opacity="0.55"/>
<line x1="402.9" y1="1209.2" x2="813.5" y2="1209.2" stroke="#4a7f8f" stroke-width="1" opacity="0.55"/>
<line x1="384.6" y1="1233.6" x2="733.1" y2="1233.6" stroke="#4a7f8f" stroke-width="1" opacity="0.55"/>
<line x1="395.8" y1="1254.7" x2="813.5" y2="1254.7" stroke="#4a7f8f" stroke-width="1" opacity="0.55"/>
<line x1="421.5" y1="1271.9" x2="813.5" y2="1271.9" stroke="#4a7f8f" stroke-width="1" opacity="0.55"/>
<line x1="366.5" y1="1290.7" x2="709.2" y2="1290.7" stroke="#4a7f8f" stroke-width="1" opacity="0.55"/>
</g>
<clipPath id="c248"><rect x="380" y="1000" width="420" height="153"/></clipPath><g clip-path="url(#c248)">
<line x1="807.8" y1="853.0" x2="807.8" y2="1156.5" stroke="#4a7f8f" stroke-width="1" opacity="0.55"/>
<line x1="783.9" y1="854.1" x2="783.9" y2="1300.0" stroke="#4a7f8f" stroke-width="1" opacity="0.55"/>
<line x1="762.7" y1="853.0" x2="762.7" y2="1279.1" stroke="#4a7f8f" stroke-width="1" opacity="0.55"/>
<line x1="736.1" y1="855.7" x2="736.1" y2="1300.0" stroke="#4a7f8f" stroke-width="1" opacity="0.55"/>
<line x1="707.3" y1="853.0" x2="707.3" y2="1232.4" stroke="#4a7f8f" stroke-width="1" opacity="0.55"/>
<line x1="685.5" y1="853.0" x2="685.5" y2="1171.9" stroke="#4a7f8f" stroke-width="1" opacity="0.55"/>
<line x1="657.2" y1="853.0" x2="657.2" y2="1208.9" stroke="#4a7f8f" stroke-width="1" opacity="0.55"/>
<line x1="626.7" y1="853.0" x2="626.7" y2="1143.8" stroke="#4a7f8f" stroke-width="1" opacity="0.55"/>
<line x1="598.6" y1="853.0" x2="598.6" y2="1130.7" stroke="#4a7f8f" stroke-width="1" opacity="0.55"/>
<line x1="572.9" y1="1014.7" x2="572.9" y2="1300.0" stroke="#4a7f8f" stroke-width="1" opacity="0.55"/>
<line x1="548.4" y1="993.5" x2="548.4" y2="1193.5" stroke="#4a7f8f" stroke-width="1" opacity="0.55"/>
<line x1="522.1" y1="853.0" x2="522.1" y2="1160.2" stroke="#4a7f8f" stroke-width="1" opacity="0.55"/>
<line x1="503.1" y1="853.0" x2="503.1" y2="1143.2" stroke="#4a7f8f" stroke-width="1" opacity="0.55"/>
<line x1="479.4" y1="853.0" x2="479.4" y2="1300.0" stroke="#4a7f8f" stroke-width="1" opacity="0.55"/>
<line x1="456.7" y1="853.0" x2="456.7" y2="1300.0" stroke="#4a7f8f" stroke-width="1" opacity="0.55"/>
<line x1="430.7" y1="853.0" x2="430.7" y2="1228.4" stroke="#4a7f8f" stroke-width="1" opacity="0.55"/>
<line x1="396.7" y1="853.0" x2="396.7" y2="1196.3" stroke="#4a7f8f" stroke-width="1" opacity="0.55"/>
<line x1="370.2" y1="970.8" x2="370.2" y2="1199.6" stroke="#4a7f8f" stroke-width="1" opacity="0.55"/>
</g>
<clipPath id="c268"><rect x="440" y="320" width="340" height="160"/></clipPath><g clip-path="url(#c268)">
<line x1="568.1" y1="132.2" x2="781.8" y2="281.8" stroke="#4a7f8f" stroke-width="1" opacity="0.55"/>
<line x1="546.6" y1="163.0" x2="753.4" y2="307.8" stroke="#4a7f8f" stroke-width="1" opacity="0.55"/>
<line x1="550.1" y1="191.7" x2="730.3" y2="317.8" stroke="#4a7f8f" stroke-width="1" opacity="0.55"/>
<line x1="519.6" y1="201.5" x2="782.7" y2="385.7" stroke="#4a7f8f" stroke-width="1" opacity="0.55"/>
<line x1="507.9" y1="218.2" x2="815.8" y2="433.7" stroke="#4a7f8f" stroke-width="1" opacity="0.55"/>
<line x1="551.2" y1="288.4" x2="791.0" y2="456.3" stroke="#4a7f8f" stroke-width="1" opacity="0.55"/>
<line x1="477.6" y1="261.5" x2="785.4" y2="477.0" stroke="#4a7f8f" stroke-width="1" opacity="0.55"/>
<line x1="457.4" y1="290.4" x2="763.0" y2="504.3" stroke="#4a7f8f" stroke-width="1" opacity="0.55"/>
<line x1="444.6" y1="308.6" x2="752.4" y2="524.1" stroke="#4a7f8f" stroke-width="1" opacity="0.55"/>
<line x1="432.6" y1="325.7" x2="740.4" y2="541.3" stroke="#4a7f8f" stroke-width="1" opacity="0.55"/>
<line x1="511.7" y1="410.9" x2="713.7" y2="552.4" stroke="#4a7f8f" stroke-width="1" opacity="0.55"/>
<line x1="401.8" y1="369.7" x2="648.4" y2="542.3" stroke="#4a7f8f" stroke-width="1" opacity="0.55"/>
<line x1="413.5" y1="421.9" x2="689.0" y2="614.8" stroke="#4a7f8f" stroke-width="1" opacity="0.55"/>
<line x1="394.0" y1="428.6" x2="671.6" y2="622.9" stroke="#4a7f8f" stroke-width="1" opacity="0.55"/>
<line x1="353.5" y1="438.8" x2="634.8" y2="635.8" stroke="#4a7f8f" stroke-width="1" opacity="0.55"/>
</g>
<clipPath id="c285"><rect x="775" y="320" width="425" height="140"/></clipPath><g clip-path="url(#c285)">
<line x1="744.6" y1="180.2" x2="1190.3" y2="141.2" stroke="#4a7f8f" stroke-width="1" opacity="0.35"/>
<line x1="747.4" y1="212.2" x2="1193.1" y2="173.2" stroke="#4a7f8f" stroke-width="1" opacity="0.35"/>
<line x1="750.1" y1="243.7" x2="1194.6" y2="204.9" stroke="#4a7f8f" stroke-width="1" opacity="0.35"/>
<line x1="894.9" y1="260.0" x2="1196.7" y2="233.6" stroke="#4a7f8f" stroke-width="1" opacity="0.35"/>
<line x1="891.3" y1="287.6" x2="1054.0" y2="273.3" stroke="#4a7f8f" stroke-width="1" opacity="0.35"/>
<line x1="903.9" y1="317.4" x2="1139.1" y2="296.8" stroke="#4a7f8f" stroke-width="1" opacity="0.35"/>
<line x1="760.5" y1="362.1" x2="1206.2" y2="323.1" stroke="#4a7f8f" stroke-width="1" opacity="0.35"/>
<line x1="768.0" y1="378.2" x2="1139.2" y2="345.7" stroke="#4a7f8f" stroke-width="1" opacity="0.35"/>
<line x1="764.5" y1="408.6" x2="1210.3" y2="369.6" stroke="#4a7f8f" stroke-width="1" opacity="0.35"/>
<line x1="883.0" y1="421.3" x2="1034.5" y2="408.1" stroke="#4a7f8f" stroke-width="1" opacity="0.35"/>
<line x1="833.0" y1="457.6" x2="1140.8" y2="430.6" stroke="#4a7f8f" stroke-width="1" opacity="0.35"/>
<line x1="883.3" y1="485.2" x2="1063.6" y2="469.4" stroke="#4a7f8f" stroke-width="1" opacity="0.35"/>
<line x1="801.7" y1="526.3" x2="1156.3" y2="495.3" stroke="#4a7f8f" stroke-width="1" opacity="0.35"/>
<line x1="777.4" y1="555.4" x2="1092.0" y2="527.9" stroke="#4a7f8f" stroke-width="1" opacity="0.35"/>
<line x1="778.6" y1="569.0" x2="1224.3" y2="530.0" stroke="#4a7f8f" stroke-width="1" opacity="0.35"/>
<line x1="781.5" y1="602.5" x2="1216.1" y2="564.5" stroke="#4a7f8f" stroke-width="1" opacity="0.35"/>
</g>
<clipPath id="c303"><rect x="775" y="320" width="425" height="140"/></clipPath><g clip-path="url(#c303)">
<line x1="1192.4" y1="290.9" x2="1227.4" y2="489.7" stroke="#4a7f8f" stroke-width="1" opacity="0.35"/>
<line x1="1139.2" y1="146.7" x2="1215.1" y2="577.1" stroke="#4a7f8f" stroke-width="1" opacity="0.35"/>
<line x1="1111.8" y1="140.9" x2="1189.5" y2="581.6" stroke="#4a7f8f" stroke-width="1" opacity="0.35"/>
<line x1="1094.6" y1="254.4" x2="1153.4" y2="587.9" stroke="#4a7f8f" stroke-width="1" opacity="0.35"/>
<line x1="1032.2" y1="154.9" x2="1088.4" y2="473.9" stroke="#4a7f8f" stroke-width="1" opacity="0.35"/>
<line x1="1033.2" y1="316.4" x2="1083.3" y2="600.3" stroke="#4a7f8f" stroke-width="1" opacity="0.35"/>
<line x1="990.0" y1="315.8" x2="1041.5" y2="607.7" stroke="#4a7f8f" stroke-width="1" opacity="0.35"/>
<line x1="935.3" y1="172.0" x2="988.9" y2="476.2" stroke="#4a7f8f" stroke-width="1" opacity="0.35"/>
<line x1="910.3" y1="183.5" x2="979.0" y2="573.2" stroke="#4a7f8f" stroke-width="1" opacity="0.35"/>
<line x1="863.7" y1="184.6" x2="941.4" y2="625.3" stroke="#4a7f8f" stroke-width="1" opacity="0.35"/>
<line x1="838.8" y1="189.0" x2="910.0" y2="592.4" stroke="#4a7f8f" stroke-width="1" opacity="0.35"/>
<line x1="820.2" y1="309.0" x2="877.9" y2="636.5" stroke="#4a7f8f" stroke-width="1" opacity="0.35"/>
<line x1="772.9" y1="200.7" x2="827.6" y2="511.0" stroke="#4a7f8f" stroke-width="1" opacity="0.35"/>
<line x1="739.0" y1="206.6" x2="816.7" y2="647.3" stroke="#4a7f8f" stroke-width="1" opacity="0.35"/>
</g>
<clipPath id="c319"><rect x="775" y="460" width="300" height="693"/></clipPath><g clip-path="url(#c319)">
<line x1="781.2" y1="444.2" x2="1039.6" y2="421.6" stroke="#4a7f8f" stroke-width="1" opacity="0.35"/>
<line x1="519.0" y1="498.0" x2="1271.3" y2="432.2" stroke="#4a7f8f" stroke-width="1" opacity="0.35"/>
<line x1="521.1" y1="521.8" x2="1225.1" y2="460.2" stroke="#4a7f8f" stroke-width="1" opacity="0.35"/>
<line x1="523.6" y1="550.3" x2="1193.0" y2="491.7" stroke="#4a7f8f" stroke-width="1" opacity="0.35"/>
<line x1="589.6" y1="570.4" x2="1278.1" y2="510.2" stroke="#4a7f8f" stroke-width="1" opacity="0.35"/>
<line x1="527.5" y1="595.7" x2="987.0" y2="555.5" stroke="#4a7f8f" stroke-width="1" opacity="0.35"/>
<line x1="530.0" y1="624.0" x2="1024.1" y2="580.8" stroke="#4a7f8f" stroke-width="1" opacity="0.35"/>
<line x1="740.8" y1="632.4" x2="1284.6" y2="584.8" stroke="#4a7f8f" stroke-width="1" opacity="0.35"/>
<line x1="535.8" y1="689.7" x2="1164.8" y2="634.7" stroke="#4a7f8f" stroke-width="1" opacity="0.35"/>
<line x1="537.7" y1="712.0" x2="1290.0" y2="646.2" stroke="#4a7f8f" stroke-width="1" opacity="0.35"/>
<line x1="802.1" y1="725.9" x2="1293.2" y2="682.9" stroke="#4a7f8f" stroke-width="1" opacity="0.35"/>
<line x1="605.4" y1="772.1" x2="1005.2" y2="737.1" stroke="#4a7f8f" stroke-width="1" opacity="0.35"/>
<line x1="545.7" y1="803.8" x2="1298.0" y2="738.0" stroke="#4a7f8f" stroke-width="1" opacity="0.35"/>
<line x1="548.2" y1="831.3" x2="1029.6" y2="789.2" stroke="#4a7f8f" stroke-width="1" opacity="0.35"/>
<line x1="549.5" y1="847.0" x2="1096.9" y2="799.2" stroke="#4a7f8f" stroke-width="1" opacity="0.35"/>
<line x1="629.7" y1="873.6" x2="1219.2" y2="822.1" stroke="#4a7f8f" stroke-width="1" opacity="0.35"/>
<line x1="844.9" y1="882.0" x2="1307.1" y2="841.5" stroke="#4a7f8f" stroke-width="1" opacity="0.35"/>
<line x1="558.0" y1="943.3" x2="1133.6" y2="893.0" stroke="#4a7f8f" stroke-width="1" opacity="0.35"/>
<line x1="559.8" y1="964.3" x2="1223.2" y2="906.2" stroke="#4a7f8f" stroke-width="1" opacity="0.35"/>
<line x1="821.8" y1="971.2" x2="1260.4" y2="932.8" stroke="#4a7f8f" stroke-width="1" opacity="0.35"/>
<line x1="625.1" y1="1010.3" x2="1316.6" y2="949.8" stroke="#4a7f8f" stroke-width="1" opacity="0.35"/>
<line x1="715.6" y1="1044.1" x2="1259.0" y2="996.6" stroke="#4a7f8f" stroke-width="1" opacity="0.35"/>
<line x1="673.7" y1="1062.5" x2="1321.5" y2="1005.8" stroke="#4a7f8f" stroke-width="1" opacity="0.35"/>
<line x1="571.7" y1="1100.8" x2="1087.7" y2="1055.7" stroke="#4a7f8f" stroke-width="1" opacity="0.35"/>
<line x1="607.9" y1="1133.2" x2="1327.1" y2="1070.2" stroke="#4a7f8f" stroke-width="1" opacity="0.35"/>
<line x1="576.4" y1="1153.6" x2="1328.6" y2="1087.8" stroke="#4a7f8f" stroke-width="1" opacity="0.35"/>
<line x1="579.8" y1="1193.3" x2="1151.9" y2="1143.2" stroke="#4a7f8f" stroke-width="1" opacity="0.35"/>
</g>
<clipPath id="c348"><rect x="775" y="460" width="300" height="693"/></clipPath><g clip-path="url(#c348)">
<line x1="1233.4" y1="368.7" x2="1358.7" y2="1079.2" stroke="#4a7f8f" stroke-width="1" opacity="0.35"/>
<line x1="1221.1" y1="451.6" x2="1338.5" y2="1117.0" stroke="#4a7f8f" stroke-width="1" opacity="0.35"/>
<line x1="1210.6" y1="643.9" x2="1267.1" y2="964.2" stroke="#4a7f8f" stroke-width="1" opacity="0.35"/>
<line x1="1130.2" y1="386.9" x2="1261.3" y2="1130.6" stroke="#4a7f8f" stroke-width="1" opacity="0.35"/>
<line x1="1111.5" y1="490.4" x2="1217.3" y2="1090.2" stroke="#4a7f8f" stroke-width="1" opacity="0.35"/>
<line x1="1060.6" y1="399.2" x2="1162.3" y2="975.9" stroke="#4a7f8f" stroke-width="1" opacity="0.35"/>
<line x1="1024.9" y1="405.5" x2="1127.8" y2="989.1" stroke="#4a7f8f" stroke-width="1" opacity="0.35"/>
<line x1="999.2" y1="468.8" x2="1104.7" y2="1067.2" stroke="#4a7f8f" stroke-width="1" opacity="0.35"/>
<line x1="964.7" y1="463.9" x2="1052.3" y2="960.9" stroke="#4a7f8f" stroke-width="1" opacity="0.35"/>
<line x1="946.7" y1="519.9" x2="1059.3" y2="1158.6" stroke="#4a7f8f" stroke-width="1" opacity="0.35"/>
<line x1="942.3" y1="715.2" x2="990.7" y2="989.5" stroke="#4a7f8f" stroke-width="1" opacity="0.35"/>
<line x1="853.2" y1="435.8" x2="984.4" y2="1179.4" stroke="#4a7f8f" stroke-width="1" opacity="0.35"/>
<line x1="864.2" y1="629.5" x2="920.3" y2="947.3" stroke="#4a7f8f" stroke-width="1" opacity="0.35"/>
<line x1="819.2" y1="564.2" x2="929.4" y2="1189.1" stroke="#4a7f8f" stroke-width="1" opacity="0.35"/>
<line x1="758.6" y1="452.4" x2="889.7" y2="1196.1" stroke="#4a7f8f" stroke-width="1" opacity="0.35"/>
<line x1="761.4" y1="637.1" x2="847.3" y2="1124.1" stroke="#4a7f8f" stroke-width="1" opacity="0.35"/>
<line x1="717.4" y1="635.7" x2="818.5" y2="1208.7" stroke="#4a7f8f" stroke-width="1" opacity="0.35"/>
<line x1="701.5" y1="684.0" x2="794.8" y2="1212.9" stroke="#4a7f8f" stroke-width="1" opacity="0.35"/>
<line x1="623.1" y1="476.3" x2="754.2" y2="1220.0" stroke="#4a7f8f" stroke-width="1" opacity="0.35"/>
<line x1="591.5" y1="481.9" x2="686.6" y2="1021.2" stroke="#4a7f8f" stroke-width="1" opacity="0.35"/>
<line x1="581.0" y1="612.4" x2="690.2" y2="1231.3" stroke="#4a7f8f" stroke-width="1" opacity="0.35"/>
<line x1="523.8" y1="493.8" x2="624.7" y2="1066.0" stroke="#4a7f8f" stroke-width="1" opacity="0.35"/>
<line x1="495.5" y1="498.8" x2="609.6" y2="1145.9" stroke="#4a7f8f" stroke-width="1" opacity="0.35"/>
</g>
<clipPath id="c373"><rect x="1075" y="960" width="125" height="193"/></clipPath><g clip-path="url(#c373)">
<line x1="1082.7" y1="946.2" x2="1252.5" y2="946.2" stroke="#4a7f8f" stroke-width="1" opacity="0.45"/>
<line x1="1112.2" y1="958.3" x2="1210.5" y2="958.3" stroke="#4a7f8f" stroke-width="1" opacity="0.45"/>
<line x1="1022.5" y1="973.9" x2="1252.5" y2="973.9" stroke="#4a7f8f" stroke-width="1" opacity="0.45"/>
<line x1="1075.4" y1="995.7" x2="1252.5" y2="995.7" stroke="#4a7f8f" stroke-width="1" opacity="0.45"/>
<line x1="1022.5" y1="1015.9" x2="1252.5" y2="1015.9" stroke="#4a7f8f" stroke-width="1" opacity="0.45"/>
<line x1="1022.5" y1="1035.1" x2="1247.7" y2="1035.1" stroke="#4a7f8f" stroke-width="1" opacity="0.45"/>
<line x1="1022.5" y1="1046.4" x2="1230.6" y2="1046.4" stroke="#4a7f8f" stroke-width="1" opacity="0.45"/>
<line x1="1022.5" y1="1063.5" x2="1165.7" y2="1063.5" stroke="#4a7f8f" stroke-width="1" opacity="0.45"/>
<line x1="1023.8" y1="1083.1" x2="1199.2" y2="1083.1" stroke="#4a7f8f" stroke-width="1" opacity="0.45"/>
<line x1="1046.9" y1="1105.7" x2="1228.7" y2="1105.7" stroke="#4a7f8f" stroke-width="1" opacity="0.45"/>
<line x1="1022.5" y1="1126.3" x2="1234.2" y2="1126.3" stroke="#4a7f8f" stroke-width="1" opacity="0.45"/>
<line x1="1034.4" y1="1138.4" x2="1252.5" y2="1138.4" stroke="#4a7f8f" stroke-width="1" opacity="0.45"/>
<line x1="1022.5" y1="1160.9" x2="1212.2" y2="1160.9" stroke="#4a7f8f" stroke-width="1" opacity="0.45"/>
</g>
<clipPath id="c388"><rect x="1075" y="960" width="125" height="193"/></clipPath><g clip-path="url(#c388)">
<line x1="1252.0" y1="937.5" x2="1258.9" y2="1134.1" stroke="#4a7f8f" stroke-width="1" opacity="0.45"/>
<line x1="1222.2" y1="938.5" x2="1228.0" y2="1103.4" stroke="#4a7f8f" stroke-width="1" opacity="0.45"/>
<line x1="1206.5" y1="1015.8" x2="1211.3" y2="1155.2" stroke="#4a7f8f" stroke-width="1" opacity="0.45"/>
<line x1="1186.3" y1="963.1" x2="1190.9" y2="1094.8" stroke="#4a7f8f" stroke-width="1" opacity="0.45"/>
<line x1="1167.0" y1="940.4" x2="1172.6" y2="1100.8" stroke="#4a7f8f" stroke-width="1" opacity="0.45"/>
<line x1="1142.4" y1="980.7" x2="1149.1" y2="1171.1" stroke="#4a7f8f" stroke-width="1" opacity="0.45"/>
<line x1="1117.3" y1="1027.6" x2="1122.4" y2="1172.1" stroke="#4a7f8f" stroke-width="1" opacity="0.45"/>
<line x1="1100.3" y1="942.8" x2="1108.4" y2="1172.6" stroke="#4a7f8f" stroke-width="1" opacity="0.45"/>
<line x1="1071.4" y1="1020.3" x2="1076.8" y2="1173.7" stroke="#4a7f8f" stroke-width="1" opacity="0.45"/>
<line x1="1060.0" y1="1031.8" x2="1064.9" y2="1174.1" stroke="#4a7f8f" stroke-width="1" opacity="0.45"/>
<line x1="1032.3" y1="958.3" x2="1039.1" y2="1154.4" stroke="#4a7f8f" stroke-width="1" opacity="0.45"/>
</g>
<clipPath id="c401"><rect x="1075" y="460" width="125" height="500"/></clipPath><g clip-path="url(#c401)">
<line x1="1066.2" y1="446.8" x2="1395.2" y2="446.8" stroke="#4a7f8f" stroke-width="1" opacity="0.2"/>
<line x1="879.8" y1="500.4" x2="1395.2" y2="500.4" stroke="#4a7f8f" stroke-width="1" opacity="0.2"/>
<line x1="879.8" y1="582.4" x2="1395.2" y2="582.4" stroke="#4a7f8f" stroke-width="1" opacity="0.2"/>
<line x1="879.8" y1="642.7" x2="1331.9" y2="642.7" stroke="#4a7f8f" stroke-width="1" opacity="0.2"/>
<line x1="879.8" y1="693.4" x2="1371.0" y2="693.4" stroke="#4a7f8f" stroke-width="1" opacity="0.2"/>
<line x1="928.1" y1="754.3" x2="1290.7" y2="754.3" stroke="#4a7f8f" stroke-width="1" opacity="0.2"/>
<line x1="909.6" y1="796.4" x2="1291.7" y2="796.4" stroke="#4a7f8f" stroke-width="1" opacity="0.2"/>
<line x1="879.8" y1="873.7" x2="1362.4" y2="873.7" stroke="#4a7f8f" stroke-width="1" opacity="0.2"/>
<line x1="879.8" y1="931.2" x2="1395.2" y2="931.2" stroke="#4a7f8f" stroke-width="1" opacity="0.2"/>
</g>
<polygon points="1056,320 1200,320 1200,458" fill="#006790"/>
<polyline points="1056,320 1200,458" fill="none" stroke="#4d8494" stroke-width="1.2"/>
<polyline points="230,342 336,402 420,440" fill="none" stroke="#558a99" stroke-width="2.2" stroke-linejoin="round" stroke-linecap="round" opacity="0.75"/>
<polyline points="245,340 200,386 152,464 120,517 70,600" fill="none" stroke="#558a99" stroke-width="2.2" stroke-linejoin="round" stroke-linecap="round" opacity="0.75"/>
<polyline points="92,338 60,430 35,480 0,540" fill="none" stroke="#558a99" stroke-width="2.2" stroke-linejoin="round" stroke-linecap="round" opacity="0.75"/>
<polyline points="220,507 222,600 230,830 232,900" fill="none" stroke="#558a99" stroke-width="2.2" stroke-linejoin="round" stroke-linecap="round" opacity="0.75"/>
<polyline points="0,870 220,837 530,770 780,718" fill="none" stroke="#558a99" stroke-width="2.2" stroke-linejoin="round" stroke-linecap="round" opacity="0.75"/>
<polyline points="0,935 210,937 250,942 400,945 800,952" fill="none" stroke="#558a99" stroke-width="2.2" stroke-linejoin="round" stroke-linecap="round" opacity="0.75"/>
<polyline points="513,957 505,1153" fill="none" stroke="#558a99" stroke-width="2.2" stroke-linejoin="round" stroke-linecap="round" opacity="0.75"/>
<polyline points="570,877 590,1153" fill="none" stroke="#558a99" stroke-width="2.2" stroke-linejoin="round" stroke-linecap="round" opacity="0.75"/>
<polyline points="713,880 745,1153" fill="none" stroke="#558a99" stroke-width="2.2" stroke-linejoin="round" stroke-linecap="round" opacity="0.75"/>
<polyline points="0,1095 380,1090 800,1088" fill="none" stroke="#558a99" stroke-width="2.2" stroke-linejoin="round" stroke-linecap="round" opacity="0.75"/>
<polyline points="0,635 200,640 400,660" fill="none" stroke="#558a99" stroke-width="2.2" stroke-linejoin="round" stroke-linecap="round" opacity="0.75"/>
<polyline points="300,660 400,700 520,740 600,760" fill="none" stroke="#558a99" stroke-width="2.2" stroke-linejoin="round" stroke-linecap="round" opacity="0.75"/>
<polyline points="0,792 380,790" fill="none" stroke="#558a99" stroke-width="2.2" stroke-linejoin="round" stroke-linecap="round" opacity="0.75"/>
<polyline points="380,1000 800,1010" fill="none" stroke="#558a99" stroke-width="2.2" stroke-linejoin="round" stroke-linecap="round" opacity="0.75"/>
<polyline points="775,700 1200,720" fill="none" stroke="#558a99" stroke-width="2.2" stroke-linejoin="round" stroke-linecap="round" opacity="0.75"/>
<polyline points="775,870 1200,880" fill="none" stroke="#558a99" stroke-width="2.2" stroke-linejoin="round" stroke-linecap="round" opacity="0.75"/>
<polyline points="1050,458 1100,620 1130,1153" fill="none" stroke="#558a99" stroke-width="2.2" stroke-linejoin="round" stroke-linecap="round" opacity="0.75"/>
<polyline points="420,440 520,560 600,700" fill="none" stroke="#558a99" stroke-width="2.2" stroke-linejoin="round" stroke-linecap="round" opacity="0.75"/>
<polyline points="650,460 690,600 740,760 760,1153" fill="none" stroke="#558a99" stroke-width="2.2" stroke-linejoin="round" stroke-linecap="round" opacity="0.75"/>
<polyline points="0,1060 400,1062" fill="none" stroke="#558a99" stroke-width="2.2" stroke-linejoin="round" stroke-linecap="round" opacity="0.75"/>
<polyline points="130,320 160,400 200,500" fill="none" stroke="#558a99" stroke-width="2.2" stroke-linejoin="round" stroke-linecap="round" opacity="0.75"/>
<polyline points="200,890 227,873 267,870 317,877 400,872 470,885 520,893" fill="none" stroke="#2b7fa8" stroke-width="1.5" stroke-linejoin="round" stroke-linecap="round" />
<polyline points="550,480 652,717" fill="none" stroke="#2b7fa8" stroke-width="1.5" stroke-linejoin="round" stroke-linecap="round" stroke-dasharray="6 3"/>
<polyline points="707,780 767,767" fill="none" stroke="#2b7fa8" stroke-width="1.5" stroke-linejoin="round" stroke-linecap="round" />
<polyline points="513,857 527,857 520,893" fill="none" stroke="#2b7fa8" stroke-width="1.5" stroke-linejoin="round" stroke-linecap="round" />
<polyline points="880,320 897,362 975,620" fill="none" stroke="#2b7fa8" stroke-width="1.5" stroke-linejoin="round" stroke-linecap="round" />
<polyline points="831,333 844,361" fill="none" stroke="#2b7fa8" stroke-width="1.5" stroke-linejoin="round" stroke-linecap="round" />
<polygon points="415,523 437,519 440,536 446,540 443,548 424,547" fill="#1d8a7c"/>
<rect x="86" y="760" width="8" height="12" fill="#1d8a7c" opacity="0.85"/>
<rect x="93" y="779" width="5" height="4" fill="#1d8a7c" opacity="0.85"/>
<rect x="390" y="727" width="13" height="13" fill="#1d8a7c" opacity="0.85"/>
<rect x="431" y="667" width="6" height="10" fill="#1d8a7c" opacity="0.85"/>
<rect x="536" y="660" width="7" height="6" fill="#1d8a7c" opacity="0.85"/>
<rect x="126" y="905" width="7" height="18" fill="#1d8a7c" opacity="0.85"/>
<rect x="63" y="943" width="10" height="14" fill="#1d8a7c" opacity="0.85"/>
<rect x="238" y="960" width="12" height="27" fill="#1d8a7c" opacity="0.85"/>
<rect x="245" y="945" width="8" height="15" fill="#1d8a7c" opacity="0.85"/>
<rect x="140" y="958" width="7" height="11" fill="#1d8a7c" opacity="0.85"/>
<rect x="40" y="973" width="5" height="5" fill="#1d8a7c" opacity="0.85"/>
<rect x="172" y="1008" width="8" height="15" fill="#1d8a7c" opacity="0.85"/>
<rect x="13" y="1042" width="10" height="13" fill="#1d8a7c" opacity="0.85"/>
<rect x="58" y="1080" width="5" height="5" fill="#1d8a7c" opacity="0.85"/>
<rect x="252" y="1118" width="6" height="10" fill="#1d8a7c" opacity="0.85"/>
<rect x="267" y="967" width="10" height="8" fill="#1d8a7c" opacity="0.85"/>
<rect x="278" y="972" width="12" height="15" fill="#1d8a7c" opacity="0.85"/>
<rect x="431" y="962" width="6" height="8" fill="#1d8a7c" opacity="0.85"/>
<rect x="431" y="978" width="6" height="12" fill="#1d8a7c" opacity="0.85"/>
<rect x="458" y="980" width="6" height="11" fill="#1d8a7c" opacity="0.85"/>
<rect x="763" y="776" width="10" height="6" fill="#1d8a7c" opacity="0.85"/>
<rect x="185" y="945" width="6" height="6" fill="#1d8a7c" opacity="0.85"/>
<rect x="195" y="940" width="14" height="6" fill="#1d8a7c" opacity="0.85"/>
<polygon points="651,879 712,863 713,869 652,885" fill="#1d8a7c"/>
<polygon points="653,888 713,873 714,879 654,894" fill="#1d8a7c"/>
<polyline points="135,420 148,436" fill="none" stroke="#1d8a7c" stroke-width="3.2" stroke-linejoin="round" stroke-linecap="round" />
<polyline points="113,442 122,453" fill="none" stroke="#1d8a7c" stroke-width="3.5" stroke-linejoin="round" stroke-linecap="round" />
<polygon points="305,378 320,359 347,371 355,382 337,397" fill="#72916d" opacity="0.95"/>
<polyline points="294,370 300,362 306,352 312,342 318,332 325,320" fill="none" stroke="#1d8a7c" stroke-width="2.2" stroke-linejoin="round" stroke-linecap="round" stroke-dasharray="5 2"/>
<polyline points="290,360 296,350 302,340 308,330 314,320" fill="none" stroke="#72916d" stroke-width="1.5" stroke-linejoin="round" stroke-linecap="round" stroke-dasharray="2 2"/>
<polygon points="673,982 713,980 713,1037 680,1037" fill="#72916d" opacity="0.9"/>
<polygon points="25,993 43,993 43,1020 25,1020" fill="#72916d" opacity="0.9"/>
<path d="M382,1043h18v8h-6v6h5v13h-8v-8h-9z" fill="#a9707c" opacity="0.75"/>
<polyline points="0,690 431,322 435,318" fill="none" stroke="#4f7767" stroke-width="5.4" stroke-linejoin="round" stroke-linecap="round" />
<polyline points="0,690 431,322 435,318" fill="none" stroke="#72916d" stroke-width="3.6" stroke-linejoin="round" stroke-linecap="round" />
<polyline points="326,392 403,460 497,532 525,553 543,574 556,598 557,620 556,640 562,662 580,700 613,753 627,790 643,873 670,983 683,1040" fill="none" stroke="#4f7767" stroke-width="5.2" stroke-linejoin="round" stroke-linecap="round" />
<polyline points="326,392 403,460 497,532 525,553 543,574 556,598 557,620 556,640 562,662 580,700 613,753 627,790 643,873 670,983 683,1040" fill="none" stroke="#72916d" stroke-width="3.4" stroke-linejoin="round" stroke-linecap="round" />
<polyline points="620,766 640,752 664,740 700,732 780,721 830,714" fill="none" stroke="#4f7767" stroke-width="6.3" stroke-linejoin="round" stroke-linecap="round" />
<polyline points="620,766 640,752 664,740 700,732 780,721 830,714" fill="none" stroke="#72916d" stroke-width="4.5" stroke-linejoin="round" stroke-linecap="round" />
<polyline points="630,736 632,746 638,750" fill="none" stroke="#4f7767" stroke-width="4.3" stroke-linejoin="round" stroke-linecap="round" />
<polyline points="630,736 632,746 638,750" fill="none" stroke="#72916d" stroke-width="2.5" stroke-linejoin="round" stroke-linecap="round" />
<polyline points="606,738 680,710 780,696" fill="none" stroke="#558a99" stroke-width="3" stroke-linejoin="round" stroke-linecap="round" opacity="0.8"/>
<polyline points="1200,476 1133,522 1076,620 1040,700" fill="none" stroke="#4f7767" stroke-width="5.3" stroke-linejoin="round" stroke-linecap="round" />
<polyline points="1200,476 1133,522 1076,620 1040,700" fill="none" stroke="#72916d" stroke-width="3.5" stroke-linejoin="round" stroke-linecap="round" />
<polyline points="885,320 905,362 987,620 1000,680" fill="none" stroke="#4f7767" stroke-width="5.3" stroke-linejoin="round" stroke-linecap="round" />
<polyline points="885,320 905,362 987,620 1000,680" fill="none" stroke="#72916d" stroke-width="3.5" stroke-linejoin="round" stroke-linecap="round" />
<polyline points="0,1026 400,1036 800,1045 980,1052 1040,1075 1075,1093 1124,1102 1140,1090 1149,1075 1200,1030" fill="none" stroke="#5a806e" stroke-width="7.5" stroke-linejoin="round" stroke-linecap="round" />
<polyline points="0,1026 400,1036 800,1045 980,1052 1040,1075 1075,1093 1124,1102 1140,1090 1149,1075 1200,1030" fill="none" stroke="#72916d" stroke-width="6" stroke-linejoin="round" stroke-linecap="round" />
<polyline points="0,1026 400,1036 800,1045 980,1052 1040,1075 1075,1093 1124,1102 1140,1090 1149,1075 1200,1030" fill="none" stroke="#5a806e" stroke-width="1.2" stroke-linejoin="round" stroke-linecap="round" />
<polyline points="1040,1125 1090,1119 1119,1112 1141,1109 1200,1107" fill="none" stroke="#4f7767" stroke-width="4.8" stroke-linejoin="round" stroke-linecap="round" />
<polyline points="1040,1125 1090,1119 1119,1112 1141,1109 1200,1107" fill="none" stroke="#72916d" stroke-width="3" stroke-linejoin="round" stroke-linecap="round" />
<polyline points="1119,1119 1137,1116" fill="none" stroke="#2b7fa8" stroke-width="2.5" stroke-linejoin="round" stroke-linecap="round" />
<polygon points="1190,1072 1200,1060 1200,1100 1192,1095" fill="#72916d"/>
<polyline points="200,1147 400,1137 495,1131 800,1119" fill="none" stroke="#1f8a80" stroke-width="5" stroke-linejoin="round" stroke-linecap="round" stroke-dasharray="60 6"/>
<path d="M279,336 C276.5,326.0 270.875,324.75 270.875,321.0 A8.125,8.125 0 1 1 287.125,321.0 C287.125,324.75 281.5,326.0 279,336z" fill="#3b626b"/>
<circle cx="279" cy="321.0" r="3.25" fill="#a9cdd8" opacity="0.85"/>
<path d="M330,376 C327.5,366.0 321.875,364.75 321.875,361.0 A8.125,8.125 0 1 1 338.125,361.0 C338.125,364.75 332.5,366.0 330,376z" fill="#1a72a0"/>
<circle cx="330" cy="361.0" r="3.25" fill="#a9cdd8" opacity="0.85"/>
<path d="M350,412 C347.5,402.0 341.875,400.75 341.875,397.0 A8.125,8.125 0 1 1 358.125,397.0 C358.125,400.75 352.5,402.0 350,412z" fill="#6f5a7c"/>
<circle cx="350" cy="397.0" r="3.25" fill="#a9cdd8" opacity="0.85"/>
<path d="M266,457 C263.5,447.0 257.875,445.75 257.875,442.0 A8.125,8.125 0 1 1 274.125,442.0 C274.125,445.75 268.5,447.0 266,457z" fill="#1a72a0"/>
<circle cx="266" cy="442.0" r="3.25" fill="#a9cdd8" opacity="0.85"/>
<path d="M237,474 C234.5,464.0 228.875,462.75 228.875,459.0 A8.125,8.125 0 1 1 245.125,459.0 C245.125,462.75 239.5,464.0 237,474z" fill="#0f5f6a"/>
<circle cx="237" cy="459.0" r="3.25" fill="#a9cdd8" opacity="0.85"/>
<path d="M435,494 C432.5,484.0 426.875,482.75 426.875,479.0 A8.125,8.125 0 1 1 443.125,479.0 C443.125,482.75 437.5,484.0 435,494z" fill="#6f5a7c"/>
<circle cx="435" cy="479.0" r="3.25" fill="#a9cdd8" opacity="0.85"/>
<path d="M473,499 C470.5,489.0 464.875,487.75 464.875,484.0 A8.125,8.125 0 1 1 481.125,484.0 C481.125,487.75 475.5,489.0 473,499z" fill="#1a72a0"/>
<circle cx="473" cy="484.0" r="3.25" fill="#a9cdd8" opacity="0.85"/>
<path d="M453,564 C450.5,554.0 444.875,552.75 444.875,549.0 A8.125,8.125 0 1 1 461.125,549.0 C461.125,552.75 455.5,554.0 453,564z" fill="#3b626b"/>
<circle cx="453" cy="549.0" r="3.25" fill="#a9cdd8" opacity="0.85"/>
<path d="M510,592 C507.5,582.0 501.875,580.75 501.875,577.0 A8.125,8.125 0 1 1 518.125,577.0 C518.125,580.75 512.5,582.0 510,592z" fill="#3b626b"/>
<circle cx="510" cy="577.0" r="3.25" fill="#a9cdd8" opacity="0.85"/>
<path d="M220,844 C217.5,834.0 211.875,832.75 211.875,829.0 A8.125,8.125 0 1 1 228.125,829.0 C228.125,832.75 222.5,834.0 220,844z" fill="#3b626b"/>
<circle cx="220" cy="829.0" r="3.25" fill="#a9cdd8" opacity="0.85"/>
<path d="M48,894 C45.5,884.0 39.875,882.75 39.875,879.0 A8.125,8.125 0 1 1 56.125,879.0 C56.125,882.75 50.5,884.0 48,894z" fill="#1a72a0"/>
<circle cx="48" cy="879.0" r="3.25" fill="#a9cdd8" opacity="0.85"/>
<path d="M52,947 C49.5,937.0 43.875,935.75 43.875,932.0 A8.125,8.125 0 1 1 60.125,932.0 C60.125,935.75 54.5,937.0 52,947z" fill="#3b626b"/>
<circle cx="52" cy="932.0" r="3.25" fill="#a9cdd8" opacity="0.85"/>
<path d="M345,917 C342.5,907.0 336.875,905.75 336.875,902.0 A8.125,8.125 0 1 1 353.125,902.0 C353.125,905.75 347.5,907.0 345,917z" fill="#6f5a7c"/>
<circle cx="345" cy="902.0" r="3.25" fill="#a9cdd8" opacity="0.85"/>
<path d="M387,919 C384.5,909.0 378.875,907.75 378.875,904.0 A8.125,8.125 0 1 1 395.125,904.0 C395.125,907.75 389.5,909.0 387,919z" fill="#3b626b"/>
<circle cx="387" cy="904.0" r="3.25" fill="#a9cdd8" opacity="0.85"/>
<path d="M357,1000 C354.5,990.0 348.875,988.75 348.875,985.0 A8.125,8.125 0 1 1 365.125,985.0 C365.125,988.75 359.5,990.0 357,1000z" fill="#1a72a0"/>
<circle cx="357" cy="985.0" r="3.25" fill="#a9cdd8" opacity="0.85"/>
<path d="M37,1007 C34.5,997.0 28.875,995.75 28.875,992.0 A8.125,8.125 0 1 1 45.125,992.0 C45.125,995.75 39.5,997.0 37,1007z" fill="#1a72a0"/>
<circle cx="37" cy="992.0" r="3.25" fill="#a9cdd8" opacity="0.85"/>
<path d="M186,1024 C183.5,1014.0 177.875,1012.75 177.875,1009.0 A8.125,8.125 0 1 1 194.125,1009.0 C194.125,1012.75 188.5,1014.0 186,1024z" fill="#3b626b"/>
<circle cx="186" cy="1009.0" r="3.25" fill="#a9cdd8" opacity="0.85"/>
<path d="M135,1036 C132.5,1026.0 126.875,1024.75 126.875,1021.0 A8.125,8.125 0 1 1 143.125,1021.0 C143.125,1024.75 137.5,1026.0 135,1036z" fill="#3b626b"/>
<circle cx="135" cy="1021.0" r="3.25" fill="#a9cdd8" opacity="0.85"/>
<path d="M375,1044 C372.5,1034.0 366.875,1032.75 366.875,1029.0 A8.125,8.125 0 1 1 383.125,1029.0 C383.125,1032.75 377.5,1034.0 375,1044z" fill="#1a72a0"/>
<circle cx="375" cy="1029.0" r="3.25" fill="#a9cdd8" opacity="0.85"/>
<path d="M336,1057 C333.5,1047.0 327.875,1045.75 327.875,1042.0 A8.125,8.125 0 1 1 344.125,1042.0 C344.125,1045.75 338.5,1047.0 336,1057z" fill="#1a72a0"/>
<circle cx="336" cy="1042.0" r="3.25" fill="#a9cdd8" opacity="0.85"/>
<path d="M197,1155 C194.5,1145.0 188.875,1143.75 188.875,1140.0 A8.125,8.125 0 1 1 205.125,1140.0 C205.125,1143.75 199.5,1145.0 197,1155z" fill="#3b626b"/>
<circle cx="197" cy="1140.0" r="3.25" fill="#a9cdd8" opacity="0.85"/>
<path d="M512,1047 C509.5,1037.0 503.875,1035.75 503.875,1032.0 A8.125,8.125 0 1 1 520.125,1032.0 C520.125,1035.75 514.5,1037.0 512,1047z" fill="#3b626b"/>
<circle cx="512" cy="1032.0" r="3.25" fill="#a9cdd8" opacity="0.85"/>
<path d="M523,947 C520.5,937.0 514.875,935.75 514.875,932.0 A8.125,8.125 0 1 1 531.125,932.0 C531.125,935.75 525.5,937.0 523,947z" fill="#1a72a0"/>
<circle cx="523" cy="932.0" r="3.25" fill="#a9cdd8" opacity="0.85"/>
<path d="M629,851 C626.5,841.0 620.875,839.75 620.875,836.0 A8.125,8.125 0 1 1 637.125,836.0 C637.125,839.75 631.5,841.0 629,851z" fill="#0f5f6a"/>
<circle cx="629" cy="836.0" r="3.25" fill="#a9cdd8" opacity="0.85"/>
<path d="M697,1005 C694.5,995.0 688.875,993.75 688.875,990.0 A8.125,8.125 0 1 1 705.125,990.0 C705.125,993.75 699.5,995.0 697,1005z" fill="#1a72a0"/>
<circle cx="697" cy="990.0" r="3.25" fill="#a9cdd8" opacity="0.85"/>
<path d="M681,1135 C678.5,1125.0 672.875,1123.75 672.875,1120.0 A8.125,8.125 0 1 1 689.125,1120.0 C689.125,1123.75 683.5,1125.0 681,1135z" fill="#6f5a7c"/>
<circle cx="681" cy="1120.0" r="3.25" fill="#a9cdd8" opacity="0.85"/>
<path d="M1112,1053 C1109.5,1043.0 1103.875,1041.75 1103.875,1038.0 A8.125,8.125 0 1 1 1120.125,1038.0 C1120.125,1041.75 1114.5,1043.0 1112,1053z" fill="#0f5f6a"/>
<circle cx="1112" cy="1038.0" r="3.25" fill="#a9cdd8" opacity="0.85"/>
<path d="M1086,1097 C1083.5,1087.0 1077.875,1085.75 1077.875,1082.0 A8.125,8.125 0 1 1 1094.125,1082.0 C1094.125,1085.75 1088.5,1087.0 1086,1097z" fill="#1a72a0"/>
<circle cx="1086" cy="1082.0" r="3.25" fill="#a9cdd8" opacity="0.85"/>
<path d="M1192,1069 C1189.5,1059.0 1183.875,1057.75 1183.875,1054.0 A8.125,8.125 0 1 1 1200.125,1054.0 C1200.125,1057.75 1194.5,1059.0 1192,1069z" fill="#1a72a0"/>
<circle cx="1192" cy="1054.0" r="3.25" fill="#a9cdd8" opacity="0.85"/>
<path d="M936,634 C933.5,624.0 927.875,622.75 927.875,619.0 A8.125,8.125 0 1 1 944.125,619.0 C944.125,622.75 938.5,624.0 936,634z" fill="#3b626b"/>
<circle cx="936" cy="619.0" r="3.25" fill="#a9cdd8" opacity="0.85"/>
<path d="M600,737 C597,731 589,726 589,717 A11,11 0 1 1 611,717 C611,726 603,731 600,737z" fill="#e35a5a"/>
<circle cx="600" cy="716" r="3.5" fill="#9e3a3a"/>
<rect x="9.0" y="1022" width="14" height="12" rx="3" fill="#3f7686" stroke="#24525e" stroke-width="1"/>
<text x="16" y="1031" font-size="7.5" text-anchor="middle" fill="#24525e">15</text>
<rect x="296.0" y="1026" width="14" height="12" rx="3" fill="#3f7686" stroke="#24525e" stroke-width="1"/>
<text x="303" y="1035" font-size="7.5" text-anchor="middle" fill="#24525e">15</text>
<rect x="588.0" y="1038" width="14" height="12" rx="3" fill="#3f7686" stroke="#24525e" stroke-width="1"/>
<text x="595" y="1047" font-size="7.5" text-anchor="middle" fill="#24525e">15</text>
<rect x="642.0" y="741" width="22" height="12" rx="3" fill="#3f7686" stroke="#24525e" stroke-width="1"/>
<text x="653" y="750" font-size="7.5" text-anchor="middle" fill="#24525e">134D</text>
<rect x="1129.0" y="516" width="22" height="12" rx="3" fill="#3f7686" stroke="#24525e" stroke-width="1"/>
<text x="1140" y="525" font-size="7.5" text-anchor="middle" fill="#24525e">134D</text>
<rect x="1138.0" y="1110" width="14" height="12" rx="3" fill="#3f7686" stroke="#24525e" stroke-width="1"/>
<text x="1145" y="1119" font-size="7.5" text-anchor="middle" fill="#24525e">15</text>
<rect x="919.0" y="420" width="14" height="12" rx="3" fill="#3f7686" stroke="#24525e" stroke-width="1"/>
<text x="926" y="429" font-size="7.5" text-anchor="middle" fill="#24525e">50</text>
<text x="5.6" y="330.6" font-size="13" fill="#124b58" text-anchor="start" stroke="#124b58" stroke-width="0.45">Andrés</text>
<text x="0" y="343.7" font-size="13" fill="#124b58" text-anchor="start" textLength="53" lengthAdjust="spacingAndGlyphs" stroke="#124b58" stroke-width="0.45">xcontitlán</text>
<text x="191" y="327" font-size="12.5" fill="#3b626b" text-anchor="start" textLength="78" lengthAdjust="spacingAndGlyphs" stroke="#3b626b" stroke-width="0.45">Dulce Capricho</text>
<text x="151" y="370" font-size="9" fill="#124b58" text-anchor="middle" letter-spacing="1.2" stroke="#124b58" stroke-width="0.25">SAN JOSE</text>
<text x="151" y="378.6" font-size="9" fill="#124b58" text-anchor="middle" letter-spacing="1.2" stroke="#124b58" stroke-width="0.25">GUADALUPE</text>
<text x="151" y="387.3" font-size="9" fill="#124b58" text-anchor="middle" letter-spacing="1.2" stroke="#124b58" stroke-width="0.25">HUICHOCHITLAN</text>
<text x="0" y="377.5" font-size="12.5" fill="#135f80" text-anchor="start" textLength="81" lengthAdjust="spacingAndGlyphs" stroke="#135f80" stroke-width="0.45">ega Aurrera, San</text>
<text x="0" y="388.7" font-size="12.5" fill="#135f80" text-anchor="start" textLength="87" lengthAdjust="spacingAndGlyphs" stroke="#135f80" stroke-width="0.45">es Cuexcontitlan</text>
<text x="124" y="440.5" font-size="9" fill="#124b58" text-anchor="middle" letter-spacing="1.2" stroke="#124b58" stroke-width="0.25">SAN JOSE</text>
<text x="152" y="463" font-size="8.5" fill="#124b58" text-anchor="start" textLength="80" lengthAdjust="spacingAndGlyphs" transform="rotate(-58 152 463)">Ricardo Flores Magón</text>
<text x="341" y="369" font-size="12.5" fill="#135f80" text-anchor="start" textLength="89" lengthAdjust="spacingAndGlyphs" stroke="#135f80" stroke-width="0.45">Multiplaza Santín</text>
<text x="399" y="403" font-size="13" fill="#124b58" text-anchor="start" stroke="#124b58" stroke-width="0.45">San Nic</text>
<text x="405" y="415" font-size="13" fill="#124b58" text-anchor="start" stroke="#124b58" stroke-width="0.45">Tolent</text>
<text x="243" y="424.4" font-size="12.5" fill="#6a5c7b" text-anchor="start" textLength="126" lengthAdjust="spacingAndGlyphs" stroke="#6a5c7b" stroke-width="0.45">Hotel Aeropuerto Toluca</text>
<text x="276.7" y="450" font-size="12.5" fill="#135f80" text-anchor="start" textLength="130" lengthAdjust="spacingAndGlyphs" stroke="#135f80" stroke-width="0.45">Central de Abasto Toluca</text>
<text x="143.6" y="487" font-size="12.5" fill="#0f5f6a" text-anchor="start" textLength="112.5" lengthAdjust="spacingAndGlyphs" stroke="#0f5f6a" stroke-width="0.45">Villa Charra de Toluca</text>
<text x="333.7" y="487" font-size="12.5" fill="#6a5c7b" text-anchor="start" textLength="91" lengthAdjust="spacingAndGlyphs" stroke="#6a5c7b" stroke-width="0.45">Hotel Opus Grand</text>
<text x="455" y="467.5" font-size="12.5" fill="#135f80" text-anchor="start" textLength="90" lengthAdjust="spacingAndGlyphs" stroke="#135f80" stroke-width="0.45">Crrosi SA de CV</text>
<text x="17" y="537" font-size="8.5" fill="#124b58" text-anchor="start" textLength="48" lengthAdjust="spacingAndGlyphs" transform="rotate(-68 17 537)">Revolución</text>
<text x="96.7" y="527.5" font-size="9" fill="#124b58" text-anchor="middle" letter-spacing="1.2" stroke="#124b58" stroke-width="0.25">LA MAGDALENA</text>
<text x="96.7" y="536" font-size="9" fill="#124b58" text-anchor="middle" letter-spacing="1.2" stroke="#124b58" stroke-width="0.25">OTZACATIPAN</text>
<text x="96.7" y="557.5" font-size="13" fill="#124b58" text-anchor="middle" textLength="83" lengthAdjust="spacingAndGlyphs" stroke="#124b58" stroke-width="0.45">La Magdalena</text>
<text x="96.7" y="570.6" font-size="13" fill="#124b58" text-anchor="middle" textLength="74" lengthAdjust="spacingAndGlyphs" stroke="#124b58" stroke-width="0.45">Otzacatipan</text>
<text x="241" y="550.7" font-size="9" fill="#124b58" text-anchor="middle" letter-spacing="1.2" stroke="#124b58" stroke-width="0.25">VILLAS</text>
<text x="241" y="559.3" font-size="9" fill="#124b58" text-anchor="middle" letter-spacing="1.2" stroke="#124b58" stroke-width="0.25">TULIPANES</text>
<text x="366.7" y="572.5" font-size="9" fill="#124b58" text-anchor="middle" letter-spacing="1.2" stroke="#124b58" stroke-width="0.25">BARRIO DE</text>
<text x="366.7" y="580.7" font-size="9" fill="#124b58" text-anchor="middle" letter-spacing="1.2" stroke="#124b58" stroke-width="0.25">CANALEJA</text>
<text x="35.6" y="599" font-size="10" fill="#124b58" text-anchor="middle" letter-spacing="1.5" stroke="#124b58" stroke-width="0.25">DE LA</text>
<text x="35.6" y="610.5" font-size="10" fill="#124b58" text-anchor="middle" letter-spacing="1.5" stroke="#124b58" stroke-width="0.25">TRINIDAD</text>
<text x="217.5" y="595.7" font-size="13" fill="#124b58" text-anchor="middle" textLength="65" lengthAdjust="spacingAndGlyphs" stroke="#124b58" stroke-width="0.45">San Mateo</text>
<text x="217.5" y="608.8" font-size="13" fill="#124b58" text-anchor="middle" textLength="73" lengthAdjust="spacingAndGlyphs" stroke="#124b58" stroke-width="0.45">Otzacatipan</text>
<text x="413.3" y="558.3" font-size="12.5" fill="#3b626b" text-anchor="start" textLength="29" lengthAdjust="spacingAndGlyphs" stroke="#3b626b" stroke-width="0.45">Valeo</text>
<text x="466" y="580" font-size="12.5" fill="#3b626b" text-anchor="middle" textLength="64" lengthAdjust="spacingAndGlyphs" stroke="#3b626b" stroke-width="0.45">ElringKlinger</text>
<text x="466" y="591.5" font-size="12.5" fill="#3b626b" text-anchor="middle" textLength="91" lengthAdjust="spacingAndGlyphs" stroke="#3b626b" stroke-width="0.45">México, SA de CV</text>
<text x="534" y="495" font-size="13" fill="#0f5f6a" text-anchor="middle" textLength="68" lengthAdjust="spacingAndGlyphs" stroke="#0f5f6a" stroke-width="0.45">Aeropuerto</text>
<text x="534" y="508.3" font-size="13" fill="#0f5f6a" text-anchor="middle" textLength="77" lengthAdjust="spacingAndGlyphs" stroke="#0f5f6a" stroke-width="0.45">Internacional</text>
<text x="534" y="521.7" font-size="13" fill="#0f5f6a" text-anchor="middle" textLength="58" lengthAdjust="spacingAndGlyphs" stroke="#0f5f6a" stroke-width="0.45">de Toluca</text>
<text x="534" y="535" font-size="13" fill="#0f5f6a" text-anchor="middle" textLength="29" lengthAdjust="spacingAndGlyphs" stroke="#0f5f6a" stroke-width="0.45">- AIT</text>
<text x="521.7" y="556.7" font-size="8.5" fill="#124b58" text-anchor="start" textLength="52" lengthAdjust="spacingAndGlyphs" transform="rotate(45 521.7 556.7)">San Antonio</text>
<text x="698" y="499" font-size="8.5" fill="#124b58" text-anchor="middle" letter-spacing="0.5">026</text>
<text x="755" y="523" font-size="8.5" fill="#124b58" text-anchor="middle" letter-spacing="0.5">007</text>
<text x="597" y="580.5" font-size="8.5" fill="#124b58" text-anchor="middle" letter-spacing="0.5">012</text>
<text x="684" y="609.3" font-size="13" fill="#124b58" text-anchor="middle" textLength="84" lengthAdjust="spacingAndGlyphs" stroke="#124b58" stroke-width="0.45">San Francisco</text>
<text x="684" y="623.3" font-size="13" fill="#124b58" text-anchor="middle" textLength="64" lengthAdjust="spacingAndGlyphs" stroke="#124b58" stroke-width="0.45">Totoltepec</text>
<text x="434" y="645" font-size="13" fill="#124b58" text-anchor="middle" textLength="66" lengthAdjust="spacingAndGlyphs" stroke="#124b58" stroke-width="0.45">San Miguel</text>
<text x="434" y="658.3" font-size="13" fill="#124b58" text-anchor="middle" textLength="64" lengthAdjust="spacingAndGlyphs" stroke="#124b58" stroke-width="0.45">Totoltepec</text>
<text x="533" y="677" font-size="8.5" fill="#124b58" text-anchor="start" textLength="54" lengthAdjust="spacingAndGlyphs" transform="rotate(-85 533 677)">Miguel Hidalgo</text>
<text x="680" y="653.3" font-size="12.5" fill="#0f5f6a" text-anchor="start" textLength="95" lengthAdjust="spacingAndGlyphs" stroke="#0f5f6a" stroke-width="0.45">Iglesia (San Jos</text>
<text x="680" y="665" font-size="12.5" fill="#0f5f6a" text-anchor="start" textLength="100" lengthAdjust="spacingAndGlyphs" stroke="#0f5f6a" stroke-width="0.45">Cerrillo Vista Herm</text>
<text x="560" y="651.7" font-size="8.5" fill="#124b58" text-anchor="start" textLength="50" lengthAdjust="spacingAndGlyphs" transform="rotate(62 560 651.7)">San Antonio</text>
<text x="92" y="627.3" font-size="8.5" fill="#124b58" text-anchor="start" textLength="58" lengthAdjust="spacingAndGlyphs">P.º Otzacatipan</text>
<text x="5" y="685" font-size="12.5" fill="#0f5f6a" text-anchor="start" textLength="60" lengthAdjust="spacingAndGlyphs" stroke="#0f5f6a" stroke-width="0.45">Salones de</text>
<text x="5" y="696.7" font-size="12.5" fill="#0f5f6a" text-anchor="start" textLength="57" lengthAdjust="spacingAndGlyphs" stroke="#0f5f6a" stroke-width="0.45">Alvi Toluca</text>
<text x="250.7" y="668.3" font-size="9" fill="#124b58" text-anchor="middle" letter-spacing="1.2" stroke="#124b58" stroke-width="0.25">VILLAS DE</text>
<text x="250.7" y="677.3" font-size="9" fill="#124b58" text-anchor="middle" letter-spacing="1.2" stroke="#124b58" stroke-width="0.25">SAN MATEO</text>
<text x="56" y="720.7" font-size="10.5" fill="#124b58" text-anchor="middle" letter-spacing="1.3" stroke="#124b58" stroke-width="0.25">DELEGACIÓN</text>
<text x="56" y="732.3" font-size="10.5" fill="#124b58" text-anchor="middle" letter-spacing="1.3" stroke="#124b58" stroke-width="0.25">SAN LORENZO</text>
<text x="56" y="744" font-size="10.5" fill="#124b58" text-anchor="middle" letter-spacing="1.3" stroke="#124b58" stroke-width="0.25">TEPALTITLÁN</text>
<text x="326.7" y="705" font-size="10.5" fill="#124b58" text-anchor="middle" letter-spacing="1.3" stroke="#124b58" stroke-width="0.25">DELEGACIÓN</text>
<text x="326.7" y="717.3" font-size="10.5" fill="#124b58" text-anchor="middle" letter-spacing="1.3" stroke="#124b58" stroke-width="0.25">SAN MATEO</text>
<text x="326.7" y="729.3" font-size="10.5" fill="#124b58" text-anchor="middle" letter-spacing="1.3" stroke="#124b58" stroke-width="0.25">OTZACATIPAN</text>
<text x="116" y="713" font-size="8.5" fill="#124b58" text-anchor="start" textLength="38" lengthAdjust="spacingAndGlyphs" transform="rotate(-40 116 713)">San Mateo</text>
<text x="218.3" y="721.7" font-size="9" fill="#124b58" text-anchor="middle" letter-spacing="1.2" stroke="#124b58" stroke-width="0.25">LA CRESPA</text>
<text x="406.7" y="715" font-size="8.5" fill="#124b58" text-anchor="start" textLength="72" lengthAdjust="spacingAndGlyphs" transform="rotate(31 406.7 715)">Francisco I. Madero</text>
<text x="562.7" y="721.7" font-size="9" fill="#124b58" text-anchor="middle" letter-spacing="1.2" stroke="#124b58" stroke-width="0.25">NUEVA</text>
<text x="562.7" y="730" font-size="9" fill="#124b58" text-anchor="middle" letter-spacing="1.2" stroke="#124b58" stroke-width="0.25">SAN PEDRO</text>
<text x="693" y="710" font-size="8.5" fill="#124b58" text-anchor="start" textLength="58" lengthAdjust="spacingAndGlyphs" transform="rotate(-12 693 710)">Cam. Al Cerrillo</text>
<text x="600" y="753.3" font-size="9" fill="#124b58" text-anchor="middle" letter-spacing="1.2" stroke="#124b58" stroke-width="0.25">SAN ANTONIO</text>
<text x="600" y="761.7" font-size="9" fill="#124b58" text-anchor="middle" letter-spacing="1.2" stroke="#124b58" stroke-width="0.25">ABAD</text>
<text x="693" y="754" font-size="12.5" fill="#24606b" text-anchor="start" textLength="90" lengthAdjust="spacingAndGlyphs" stroke="#24606b" stroke-width="0.45">Fraccionamiento</text>
<text x="668" y="765" font-size="12.5" fill="#24606b" text-anchor="start" textLength="122" lengthAdjust="spacingAndGlyphs" stroke="#24606b" stroke-width="0.45">Hacienda Santa Clara</text>
<text x="0" y="781.7" font-size="13" fill="#124b58" text-anchor="start" textLength="65" lengthAdjust="spacingAndGlyphs" stroke="#124b58" stroke-width="0.45">an Lorenzo</text>
<text x="0" y="795" font-size="13" fill="#124b58" text-anchor="start" textLength="60" lengthAdjust="spacingAndGlyphs" stroke="#124b58" stroke-width="0.45">Tepaltitlán</text>
<text x="226" y="781.7" font-size="13" fill="#124b58" text-anchor="start" textLength="92" lengthAdjust="spacingAndGlyphs" stroke="#124b58" stroke-width="0.45">Crespa Floresta</text>
<text x="198.3" y="802.3" font-size="9" fill="#124b58" text-anchor="middle" letter-spacing="1.2" stroke="#124b58" stroke-width="0.25">JARDÍNES DE</text>
<text x="198.3" y="810.7" font-size="9" fill="#124b58" text-anchor="middle" letter-spacing="1.2" stroke="#124b58" stroke-width="0.25">LA CRESPA</text>
<text x="103.3" y="822.3" font-size="9" fill="#124b58" text-anchor="middle" letter-spacing="1.2" stroke="#124b58" stroke-width="0.25">RINCÓN DE</text>
<text x="103.3" y="830.7" font-size="9" fill="#124b58" text-anchor="middle" letter-spacing="1.2" stroke="#124b58" stroke-width="0.25">SAN LORENZO</text>
<text x="25" y="808" font-size="8.5" fill="#124b58" text-anchor="start" textLength="52" lengthAdjust="spacingAndGlyphs" transform="rotate(90 25 808)">Miguel Hidalgo</text>
<text x="183.3" y="856.7" font-size="12" fill="#124b58" text-anchor="middle" textLength="112" lengthAdjust="spacingAndGlyphs" stroke="#124b58" stroke-width="0.45">SERVICIO MECANICO</text>
<text x="183.3" y="868.3" font-size="12" fill="#124b58" text-anchor="middle" textLength="55" lengthAdjust="spacingAndGlyphs" stroke="#124b58" stroke-width="0.45">MORGADO</text>
<text x="0" y="880" font-size="12.5" fill="#135f80" text-anchor="start" textLength="37" lengthAdjust="spacingAndGlyphs" stroke="#135f80" stroke-width="0.45">Toluca</text>
<text x="0" y="891.7" font-size="12.5" fill="#135f80" text-anchor="start" textLength="37" lengthAdjust="spacingAndGlyphs" stroke="#135f80" stroke-width="0.45">MEXICO</text>
<text x="318" y="878" font-size="8.5" fill="#124b58" text-anchor="start" textLength="58" lengthAdjust="spacingAndGlyphs" transform="rotate(-12 318 878)">Av. Cuauhtémoc</text>
<text x="366" y="890" font-size="12.5" fill="#3b626b" text-anchor="start" textLength="60" lengthAdjust="spacingAndGlyphs" stroke="#3b626b" stroke-width="0.45">La Kleotilde</text>
<text x="539.3" y="779" font-size="13" fill="#124b58" text-anchor="middle" textLength="62" lengthAdjust="spacingAndGlyphs" stroke="#124b58" stroke-width="0.45">San Pedro</text>
<text x="539.3" y="792.7" font-size="13" fill="#124b58" text-anchor="middle" textLength="64" lengthAdjust="spacingAndGlyphs" stroke="#124b58" stroke-width="0.45">Totoltepec</text>
<text x="429" y="800" font-size="8.5" fill="#124b58" text-anchor="start" textLength="40" lengthAdjust="spacingAndGlyphs" transform="rotate(-22 429 800)">Revolución</text>
<text x="705" y="811" font-size="10.5" fill="#124b58" text-anchor="middle" letter-spacing="1.3" stroke="#124b58" stroke-width="0.25">FRANCISCO</text>
<text x="705" y="822.7" font-size="10.5" fill="#124b58" text-anchor="middle" letter-spacing="1.3" stroke="#124b58" stroke-width="0.25">I MADERO</text>
<text x="466.7" y="842.3" font-size="9" fill="#124b58" text-anchor="middle" letter-spacing="1.2" stroke="#124b58" stroke-width="0.25">STA MARIA</text>
<text x="466.7" y="850.7" font-size="9" fill="#124b58" text-anchor="middle" letter-spacing="1.2" stroke="#124b58" stroke-width="0.25">TOTOLTEPEC</text>
<text x="619" y="837.7" font-size="12.5" fill="#0f5f6a" text-anchor="end" textLength="50" lengthAdjust="spacingAndGlyphs" stroke="#0f5f6a" stroke-width="0.45">Centro de</text>
<text x="619" y="850" font-size="12.5" fill="#0f5f6a" text-anchor="end" textLength="118" lengthAdjust="spacingAndGlyphs" stroke="#0f5f6a" stroke-width="0.45">Convenciones Edoméx</text>
<text x="636.7" y="870" font-size="8.5" fill="#124b58" text-anchor="start" textLength="90" lengthAdjust="spacingAndGlyphs" transform="rotate(74 636.7 870)">Blvd. Miguel Alemán</text>
<text x="596.7" y="883.3" font-size="10.5" fill="#124b58" text-anchor="middle" letter-spacing="1.3" stroke="#124b58" stroke-width="0.25">REFORMA</text>
<text x="465" y="881.7" font-size="9" fill="#124b58" text-anchor="middle" letter-spacing="1.2" stroke="#124b58" stroke-width="0.25">HÉROES</text>
<text x="465" y="890" font-size="9" fill="#124b58" text-anchor="middle" letter-spacing="1.2" stroke="#124b58" stroke-width="0.25">1RA SECC</text>
<text x="478" y="909.3" font-size="12.5" fill="#135f80" text-anchor="middle" textLength="127" lengthAdjust="spacingAndGlyphs" stroke="#135f80" stroke-width="0.45">Distribuidora De Textiles</text>
<text x="478" y="921" font-size="12.5" fill="#135f80" text-anchor="middle" textLength="90" lengthAdjust="spacingAndGlyphs" stroke="#135f80" stroke-width="0.45">Avante, SA De CV</text>
<text x="566" y="903" font-size="8.5" fill="#124b58" text-anchor="start" textLength="68" lengthAdjust="spacingAndGlyphs" transform="rotate(80 566 903)">Cjon. de San Pedro</text>
<text x="713" y="925" font-size="8.5" fill="#124b58" text-anchor="middle" letter-spacing="0.5">001</text>
<text x="724" y="988.3" font-size="8.5" fill="#124b58" text-anchor="middle" letter-spacing="0.5">002</text>
<text x="380" y="945" font-size="10.5" fill="#124b58" text-anchor="middle" letter-spacing="1.3" stroke="#124b58" stroke-width="0.25">DELEGACIÓN</text>
<text x="380" y="957" font-size="10.5" fill="#124b58" text-anchor="middle" letter-spacing="1.3" stroke="#124b58" stroke-width="0.25">SANTA MARÍA</text>
<text x="380" y="969" font-size="10.5" fill="#124b58" text-anchor="middle" letter-spacing="1.3" stroke="#124b58" stroke-width="0.25">TOTOLTEPEC</text>
<text x="455" y="969" font-size="9" fill="#124b58" text-anchor="middle" letter-spacing="1.2" stroke="#124b58" stroke-width="0.25">HÉROES</text>
<text x="455" y="977.3" font-size="9" fill="#124b58" text-anchor="middle" letter-spacing="1.2" stroke="#124b58" stroke-width="0.25">2DA SECC</text>
<text x="514" y="1022" font-size="8.5" fill="#124b58" text-anchor="start" textLength="60" lengthAdjust="spacingAndGlyphs" transform="rotate(-85 514 1022)">Hda. del Coecillo</text>
<text x="706" y="961.7" font-size="12.5" fill="#135f80" text-anchor="start" textLength="72" lengthAdjust="spacingAndGlyphs" stroke="#135f80" stroke-width="0.45">Marelli Lerma</text>
<text x="738" y="970" font-size="8.5" fill="#124b58" text-anchor="start" textLength="58" lengthAdjust="spacingAndGlyphs" transform="rotate(78 738 970)">Emiliano Zapata</text>
<text x="574" y="998.3" font-size="12.5" fill="#135f80" text-anchor="start" textLength="112" lengthAdjust="spacingAndGlyphs" stroke="#135f80" stroke-width="0.45">Plaza Sendero Toluca</text>
<text x="0" y="939.3" font-size="12.5" fill="#124b58" text-anchor="start" textLength="42.7" lengthAdjust="spacingAndGlyphs" stroke="#124b58" stroke-width="0.45">n Toluca</text>
<text x="118.3" y="936.7" font-size="8.5" fill="#124b58" text-anchor="start" textLength="90" lengthAdjust="spacingAndGlyphs">Av. Industria Automotriz</text>
<text x="113" y="977" font-size="8.5" fill="#124b58" text-anchor="start" textLength="74" lengthAdjust="spacingAndGlyphs" transform="rotate(-90 113 977)">C. Leonardo Da Vinci</text>
<text x="155" y="1013" font-size="8.5" fill="#124b58" text-anchor="start" textLength="66" lengthAdjust="spacingAndGlyphs" transform="rotate(-90 155 1013)">C. Alberto Einstein</text>
<text x="290" y="908.3" font-size="12.5" fill="#6a5c7b" text-anchor="start" textLength="43" lengthAdjust="spacingAndGlyphs" stroke="#6a5c7b" stroke-width="0.45">CiDental</text>
<text x="269.3" y="992.7" font-size="12.5" fill="#135f80" text-anchor="start" textLength="77" lengthAdjust="spacingAndGlyphs" stroke="#135f80" stroke-width="0.45">El Piojo Toluca</text>
<text x="0" y="1000.7" font-size="12.5" fill="#135f80" text-anchor="start" textLength="25.7" lengthAdjust="spacingAndGlyphs" stroke="#135f80" stroke-width="0.45">oluca</text>
<text x="35" y="1021.7" font-size="12.5" fill="#0f5f6a" text-anchor="start" textLength="90" lengthAdjust="spacingAndGlyphs" stroke="#0f5f6a" stroke-width="0.45">AeroCaminante -</text>
<text x="32" y="1034" font-size="12.5" fill="#0f5f6a" text-anchor="start" textLength="93" lengthAdjust="spacingAndGlyphs" stroke="#0f5f6a" stroke-width="0.45">Terminal Tollocan</text>
<text x="196.7" y="1017.3" font-size="12.5" fill="#3b626b" text-anchor="start" textLength="72.6" lengthAdjust="spacingAndGlyphs" stroke="#3b626b" stroke-width="0.45">Stellantis TAP</text>
<text x="275.7" y="1017.3" font-size="12.5" fill="#135f80" text-anchor="start" textLength="118.6" lengthAdjust="spacingAndGlyphs" stroke="#135f80" stroke-width="0.45">Nissan Paseo Tollocan</text>
<text x="282.7" y="1050" font-size="12.5" fill="#135f80" text-anchor="start" textLength="42.3" lengthAdjust="spacingAndGlyphs" stroke="#135f80" stroke-width="0.45">Walmart</text>
<text x="87.7" y="1057.3" font-size="10.5" fill="#124b58" text-anchor="middle" letter-spacing="1.3" stroke="#124b58" stroke-width="0.25">SANTA ANA</text>
<text x="87.7" y="1068.3" font-size="10.5" fill="#124b58" text-anchor="middle" letter-spacing="1.3" stroke="#124b58" stroke-width="0.25">TLAPALTITLÁN</text>
<text x="205" y="1072.7" font-size="10.5" fill="#124b58" text-anchor="middle" letter-spacing="1.3" stroke="#124b58" stroke-width="0.25">CASA BLANCA</text>
<text x="367" y="1086.7" font-size="10.5" fill="#124b58" text-anchor="middle" letter-spacing="1.3" stroke="#124b58" stroke-width="0.25">SAN JERONIMO</text>
<text x="367" y="1099.3" font-size="10.5" fill="#124b58" text-anchor="middle" letter-spacing="1.3" stroke="#124b58" stroke-width="0.25">CHICAHUALCO</text>
<text x="441.3" y="1042" font-size="12.5" fill="#3b626b" text-anchor="start" textLength="59.5" lengthAdjust="spacingAndGlyphs" stroke="#3b626b" stroke-width="0.45">McDonald's</text>
<text x="556.8" y="1083" font-size="10.5" fill="#124b58" text-anchor="middle" letter-spacing="1.3" stroke="#124b58" stroke-width="0.25">MADERO</text>
<text x="120" y="1141.7" font-size="12.5" fill="#124b58" text-anchor="start" textLength="65" lengthAdjust="spacingAndGlyphs" stroke="#124b58" stroke-width="0.45">Oficinas SAT</text>
<text x="124" y="1153" font-size="12.5" fill="#124b58" text-anchor="start" textLength="60" lengthAdjust="spacingAndGlyphs" stroke="#124b58" stroke-width="0.45">REGIONAL</text>
<text x="260" y="1148.3" font-size="8.5" fill="#124b58" text-anchor="start" textLength="100" lengthAdjust="spacingAndGlyphs" transform="rotate(-3 260 1148.3)">Blvd. Solidaridad las Torres</text>
<text x="558.5" y="1126.7" font-size="12.5" fill="#3b626b" text-anchor="start" textLength="112" lengthAdjust="spacingAndGlyphs" stroke="#3b626b" stroke-width="0.45">Reina Madre Metepec</text>
<text x="719.5" y="1124" font-size="8.5" fill="#124b58" text-anchor="start" textLength="100" lengthAdjust="spacingAndGlyphs" transform="rotate(-3 719.5 1124)">Blvd. Solidaridad las Torres</text>
<text x="790" y="1152" font-size="8.5" fill="#124b58" text-anchor="start" textLength="36" lengthAdjust="spacingAndGlyphs" transform="rotate(-25 790 1152)">Lerma Pte</text>
<text x="1170.6" y="907.5" font-size="8.5" fill="#124b58" text-anchor="middle" font-weight="bold" letter-spacing="1.1">AMEYALCO</text>
<text x="1109.5" y="1007.6" font-size="13" fill="#124b58" text-anchor="middle" textLength="56" lengthAdjust="spacingAndGlyphs" stroke="#124b58" stroke-width="0.45">Lerma de</text>
<text x="1109.5" y="1021" font-size="13" fill="#124b58" text-anchor="middle" textLength="44" lengthAdjust="spacingAndGlyphs" stroke="#124b58" stroke-width="0.45">Villada</text>
<text x="1175" y="1029.7" font-size="10.5" fill="#124b58" text-anchor="middle" letter-spacing="1.3" stroke="#124b58" stroke-width="0.25">FRACCION</text>
<text x="1175" y="1040.8" font-size="10.5" fill="#124b58" text-anchor="middle" letter-spacing="1.3" stroke="#124b58" stroke-width="0.25">VALLE DE</text>
<text x="1102" y="1072.5" font-size="12.5" fill="#135f80" text-anchor="start" textLength="58" lengthAdjust="spacingAndGlyphs" stroke="#135f80" stroke-width="0.45">Walmart Le</text>
<text x="1075" y="1037.4" font-size="12.5" fill="#0f5f6a" text-anchor="start" textLength="27" lengthAdjust="spacingAndGlyphs" stroke="#0f5f6a" stroke-width="0.45">empo</text>
<text x="1077" y="1048.5" font-size="12.5" fill="#0f5f6a" text-anchor="start" textLength="25" lengthAdjust="spacingAndGlyphs" stroke="#0f5f6a" stroke-width="0.45">haay</text>
<text x="880.3" y="1118.4" font-size="10.5" fill="#124b58" text-anchor="middle" letter-spacing="1.3" stroke="#124b58" stroke-width="0.25">BARRIO DE LA</text>
<text x="880.3" y="1130.6" font-size="10.5" fill="#124b58" text-anchor="middle" letter-spacing="1.3" stroke="#124b58" stroke-width="0.25">CONCEPCIÓN</text>
<text x="796" y="1099.3" font-size="10.5" fill="#124b58" text-anchor="middle" letter-spacing="1.3" stroke="#124b58" stroke-width="0.25">SANTA ELENA</text>
<text x="756" y="401.3" font-size="13" fill="#0f5f6a" text-anchor="start" textLength="50" lengthAdjust="spacingAndGlyphs" stroke="#0f5f6a" stroke-width="0.45">stitucion</text>
<text x="752" y="413" font-size="13" fill="#0f5f6a" text-anchor="start" textLength="33" lengthAdjust="spacingAndGlyphs" stroke="#0f5f6a" stroke-width="0.45">tepec</text>
<text x="827.4" y="511.2" font-size="12.5" fill="#3b626b" text-anchor="start" textLength="123" lengthAdjust="spacingAndGlyphs" stroke="#3b626b" stroke-width="0.45">Grupo Selkar S.A de C.V</text>
<text x="777" y="562.6" font-size="12.5" fill="#124b58" text-anchor="start" textLength="64" lengthAdjust="spacingAndGlyphs" stroke="#124b58" stroke-width="0.45">Arroyo Vista</text>
<text x="785" y="575" font-size="12.5" fill="#124b58" text-anchor="start" textLength="48" lengthAdjust="spacingAndGlyphs" stroke="#124b58" stroke-width="0.45">Hermosa</text>
<text x="881" y="595" font-size="12.5" fill="#3b626b" text-anchor="start" textLength="75" lengthAdjust="spacingAndGlyphs" stroke="#3b626b" stroke-width="0.45">Centrifugados</text>
<text x="872" y="606" font-size="12.5" fill="#3b626b" text-anchor="start" textLength="88" lengthAdjust="spacingAndGlyphs" stroke="#3b626b" stroke-width="0.45">Mexicanos Planta..</text>
<text x="982" y="624.4" font-size="12.5" fill="#3b626b" text-anchor="start" textLength="75" lengthAdjust="spacingAndGlyphs" stroke="#3b626b" stroke-width="0.45">Caseta Cerrillo</text>
<text x="881" y="639" font-size="9" fill="#124b58" text-anchor="middle" letter-spacing="1.2" stroke="#124b58" stroke-width="0.25">EL EMBARCADERO</text>
<text x="815" y="675" font-size="12.5" fill="#3b626b" text-anchor="start" textLength="55" lengthAdjust="spacingAndGlyphs" stroke="#3b626b" stroke-width="0.45">El Castillo</text>
<text x="848" y="770.8" font-size="13" fill="#124b58" text-anchor="start" textLength="63" lengthAdjust="spacingAndGlyphs" stroke="#124b58" stroke-width="0.45">los Cedros</text>
<text x="817" y="872" font-size="12.5" fill="#3b626b" text-anchor="start" textLength="75" lengthAdjust="spacingAndGlyphs" stroke="#3b626b" stroke-width="0.45">FOGRA, Lerma</text>
<text x="933.8" y="879.6" font-size="12.5" fill="#3b626b" text-anchor="start" textLength="48" lengthAdjust="spacingAndGlyphs" stroke="#3b626b" stroke-width="0.45">AUTOLIV</text>
<text x="842" y="885" font-size="8.5" fill="#124b58" text-anchor="middle">041</text>
<text x="993" y="1038" font-size="12.5" fill="#0f5f6a" text-anchor="start" textLength="110" lengthAdjust="spacingAndGlyphs" stroke="#0f5f6a" stroke-width="0.45">Foro Cultural Tiempo</text>
<text x="1016" y="1049.6" font-size="12.5" fill="#0f5f6a" text-anchor="start" textLength="86" lengthAdjust="spacingAndGlyphs" stroke="#0f5f6a" stroke-width="0.45">y Espacio Thaay</text>
<text x="848" y="1059" font-size="12.5" fill="#3b626b" text-anchor="start" textLength="103" lengthAdjust="spacingAndGlyphs" stroke="#3b626b" stroke-width="0.45">Terminal San Mateo</text>
<text x="1000" y="1080" font-size="12.5" fill="#3b626b" text-anchor="start" textLength="62" lengthAdjust="spacingAndGlyphs" stroke="#3b626b" stroke-width="0.45">Volkswagen</text>
<text x="981.5" y="1091.6" font-size="12.5" fill="#3b626b" text-anchor="start" textLength="95" lengthAdjust="spacingAndGlyphs" stroke="#3b626b" stroke-width="0.45">Automotriz Lerma</text>
<path d="M844,528 C841.5,518.0 835.875,516.75 835.875,513.0 A8.125,8.125 0 1 1 852.125,513.0 C852.125,516.75 846.5,518.0 844,528z" fill="#3b626b"/>
<circle cx="844" cy="513.0" r="3.25" fill="#a9cdd8" opacity="0.85"/>
<path d="M936,629 C933.5,619.0 927.875,617.75 927.875,614.0 A8.125,8.125 0 1 1 944.125,614.0 C944.125,617.75 938.5,619.0 936,629z" fill="#3b626b"/>
<circle cx="936" cy="614.0" r="3.25" fill="#a9cdd8" opacity="0.85"/>
<path d="M1068,623 C1065.5,613.0 1059.875,611.75 1059.875,608.0 A8.125,8.125 0 1 1 1076.125,608.0 C1076.125,611.75 1070.5,613.0 1068,623z" fill="#3b626b"/>
<circle cx="1068" cy="608.0" r="3.25" fill="#a9cdd8" opacity="0.85"/>
<path d="M789,757 C786.5,747.0 780.875,745.75 780.875,742.0 A8.125,8.125 0 1 1 797.125,742.0 C797.125,745.75 791.5,747.0 789,757z" fill="#3b626b"/>
<circle cx="789" cy="742.0" r="3.25" fill="#a9cdd8" opacity="0.85"/>
<path d="M901,877 C898.5,867.0 892.875,865.75 892.875,862.0 A8.125,8.125 0 1 1 909.125,862.0 C909.125,865.75 903.5,867.0 901,877z" fill="#3b626b"/>
<circle cx="901" cy="862.0" r="3.25" fill="#a9cdd8" opacity="0.85"/>
<path d="M924,879 C921.5,869.0 915.875,867.75 915.875,864.0 A8.125,8.125 0 1 1 932.125,864.0 C932.125,867.75 926.5,869.0 924,879z" fill="#3b626b"/>
<circle cx="924" cy="864.0" r="3.25" fill="#a9cdd8" opacity="0.85"/>
<path d="M787,965 C784.5,955.0 778.875,953.75 778.875,950.0 A8.125,8.125 0 1 1 795.125,950.0 C795.125,953.75 789.5,955.0 787,965z" fill="#3b626b"/>
<circle cx="787" cy="950.0" r="3.25" fill="#a9cdd8" opacity="0.85"/>
<path d="M962,1060 C959.5,1050.0 953.875,1048.75 953.875,1045.0 A8.125,8.125 0 1 1 970.125,1045.0 C970.125,1048.75 964.5,1050.0 962,1060z" fill="#3b626b"/>
<circle cx="962" cy="1045.0" r="3.25" fill="#a9cdd8" opacity="0.85"/>
<polyline points="1018,700 1022,1114" fill="none" stroke="#558a99" stroke-width="3" stroke-linejoin="round" stroke-linecap="round" opacity="0.8"/>
<text x="39.4" y="473.9" font-size="13" fill="#96bcc6" text-anchor="start" textLength="174.3" lengthAdjust="spacingAndGlyphs">For development purposes only</text>
<text x="252.8" y="473.9" font-size="13" fill="#96bcc6" text-anchor="start" textLength="174.3" lengthAdjust="spacingAndGlyphs">For development purposes only</text>
<text x="466.2" y="473.9" font-size="13" fill="#96bcc6" text-anchor="start" textLength="174.3" lengthAdjust="spacingAndGlyphs">For development purposes only</text>
<text x="679.6" y="473.9" font-size="13" fill="#96bcc6" text-anchor="start" textLength="174.3" lengthAdjust="spacingAndGlyphs">For development purposes only</text>
<text x="893.0" y="473.9" font-size="13" fill="#96bcc6" text-anchor="start" textLength="174.3" lengthAdjust="spacingAndGlyphs">For development purposes only</text>
<text x="1106.4" y="473.9" font-size="13" fill="#96bcc6" text-anchor="start" textLength="174.3" lengthAdjust="spacingAndGlyphs">For development purposes only</text>
<text x="39.4" y="686.5" font-size="13" fill="#96bcc6" text-anchor="start" textLength="174.3" lengthAdjust="spacingAndGlyphs">For development purposes only</text>
<text x="252.8" y="686.5" font-size="13" fill="#96bcc6" text-anchor="start" textLength="174.3" lengthAdjust="spacingAndGlyphs">For development purposes only</text>
<text x="466.2" y="686.5" font-size="13" fill="#96bcc6" text-anchor="start" textLength="174.3" lengthAdjust="spacingAndGlyphs">For development purposes only</text>
<text x="679.6" y="686.5" font-size="13" fill="#96bcc6" text-anchor="start" textLength="174.3" lengthAdjust="spacingAndGlyphs">For development purposes only</text>
<text x="893.0" y="686.5" font-size="13" fill="#96bcc6" text-anchor="start" textLength="174.3" lengthAdjust="spacingAndGlyphs">For development purposes only</text>
<text x="1106.4" y="686.5" font-size="13" fill="#96bcc6" text-anchor="start" textLength="174.3" lengthAdjust="spacingAndGlyphs">For development purposes only</text>
<text x="39.4" y="899.5" font-size="13" fill="#96bcc6" text-anchor="start" textLength="174.3" lengthAdjust="spacingAndGlyphs">For development purposes only</text>
<text x="252.8" y="899.5" font-size="13" fill="#96bcc6" text-anchor="start" textLength="174.3" lengthAdjust="spacingAndGlyphs">For development purposes only</text>
<text x="466.2" y="899.5" font-size="13" fill="#96bcc6" text-anchor="start" textLength="174.3" lengthAdjust="spacingAndGlyphs">For development purposes only</text>
<text x="679.6" y="899.5" font-size="13" fill="#96bcc6" text-anchor="start" textLength="174.3" lengthAdjust="spacingAndGlyphs">For development purposes only</text>
<text x="893.0" y="899.5" font-size="13" fill="#96bcc6" text-anchor="start" textLength="174.3" lengthAdjust="spacingAndGlyphs">For development purposes only</text>
<text x="1106.4" y="899.5" font-size="13" fill="#96bcc6" text-anchor="start" textLength="174.3" lengthAdjust="spacingAndGlyphs">For development purposes only</text>
<text x="39.4" y="1112.7" font-size="13" fill="#96bcc6" text-anchor="start" textLength="174.3" lengthAdjust="spacingAndGlyphs">For development purposes only</text>
<text x="252.8" y="1112.7" font-size="13" fill="#96bcc6" text-anchor="start" textLength="174.3" lengthAdjust="spacingAndGlyphs">For development purposes only</text>
<text x="466.2" y="1112.7" font-size="13" fill="#96bcc6" text-anchor="start" textLength="174.3" lengthAdjust="spacingAndGlyphs">For development purposes only</text>
<text x="679.6" y="1112.7" font-size="13" fill="#96bcc6" text-anchor="start" textLength="174.3" lengthAdjust="spacingAndGlyphs">For development purposes only</text>
<text x="893.0" y="1112.7" font-size="13" fill="#96bcc6" text-anchor="start" textLength="174.3" lengthAdjust="spacingAndGlyphs">For development purposes only</text>
<text x="1106.4" y="1112.7" font-size="13" fill="#96bcc6" text-anchor="start" textLength="174.3" lengthAdjust="spacingAndGlyphs">For development purposes only</text>
<rect x="0" y="320" width="1200" height="2" fill="#28657a"/>
</svg></div>
<div id="dlg"></div>
<svg style="position:absolute;left:0;top:0" width="1200" height="1309">
<g fill="none" stroke="#3f6f7a" stroke-width="1.35"><path d="M474.6 344.6 A4.9 4.9 0 1 0 475.4 348 H470.8"/><circle cx="480.2" cy="349.2" r="3.4"/><circle cx="488.4" cy="349.2" r="3.4"/><circle cx="496.4" cy="349" r="3.2"/><path d="M499.6 345.6 V353.5 A3.3 3.3 0 0 1 493.6 355"/><path d="M502.6 342.5 V352.8"/><path d="M505 350.2 L510 348.4 A3.3 3.3 0 1 0 509.6 351.6"/></g>
<text x="465.7" y="384.3" font-size="11.5" fill="#1a4a56" text-anchor="start" font-weight="bold" textLength="220" lengthAdjust="spacingAndGlyphs" >Esta página no puede cargar Google Maps</text>
<text x="465.7" y="400.7" font-size="11.5" fill="#1a4a56" text-anchor="start" font-weight="bold" textLength="81" lengthAdjust="spacingAndGlyphs" >correctamente.</text>
<text x="465.7" y="436.7" font-size="10" fill="#55828c" text-anchor="start" textLength="168.3" lengthAdjust="spacingAndGlyphs" stroke="#55828c" stroke-width="0.3">¿Eres el propietario de este sitio web?</text>
<rect x="652.5" y="418.5" width="82" height="29" rx="2.5" fill="none" stroke="#9fcddb" stroke-width="1"/>
<text x="673" y="437.3" font-size="12.3" fill="#1a84d4" text-anchor="start" font-weight="bold" textLength="41" lengthAdjust="spacingAndGlyphs" >Aceptar</text>
</svg>
<div id="panel"></div>
<svg style="position:absolute;left:0;top:0" width="1200" height="1309">
<text x="792" y="396.1" font-size="19.2" fill="#1d1d1d" text-anchor="start" font-weight="bold" textLength="139" lengthAdjust="spacingAndGlyphs" >Duana Services</text>
<text x="792" y="421.3" font-size="11.7" fill="#555" text-anchor="start" font-weight="bold" textLength="95.6" lengthAdjust="spacingAndGlyphs" >Oficinas en Toluca</text>
<text x="792" y="438.1" font-size="11.7" fill="#4a4a4a" text-anchor="start" textLength="126.4" lengthAdjust="spacingAndGlyphs" >Calle Noche Buena #121</text>
<text x="792" y="454.9" font-size="11.7" fill="#4a4a4a" text-anchor="start" textLength="118.3" lengthAdjust="spacingAndGlyphs" >Col. San Antonio Abad,</text>
<text x="792" y="471.6" font-size="11.7" fill="#4a4a4a" text-anchor="start" textLength="170.7" lengthAdjust="spacingAndGlyphs" >San Pedro Totoltepec, C.P. 50200</text>
<text x="792" y="488.4" font-size="11.7" fill="#4a4a4a" text-anchor="start" textLength="118.6" lengthAdjust="spacingAndGlyphs" >Toluca, Edo. de México</text>
<text x="792" y="505.2" font-size="11.7" fill="#4a4a4a" text-anchor="start" textLength="122.9" lengthAdjust="spacingAndGlyphs" >Tel. Cel. (722) 521 0887</text>
<text x="792" y="538.8" font-size="11.7" fill="#555" text-anchor="start" font-weight="bold" textLength="107" lengthAdjust="spacingAndGlyphs" >Oficinas en Pachuca</text>
<text x="792" y="555.5" font-size="11.7" fill="#4a4a4a" text-anchor="start" textLength="187.3" lengthAdjust="spacingAndGlyphs" >Privada Circuito Gobernadores #104</text>
<text x="792" y="572.3" font-size="11.7" fill="#4a4a4a" text-anchor="start" textLength="203.6" lengthAdjust="spacingAndGlyphs" >Col. Parque de Poblamiento, C.P. 42032</text>
<text x="792" y="589.1" font-size="11.7" fill="#4a4a4a" text-anchor="start" textLength="90" lengthAdjust="spacingAndGlyphs" >Pachuca, Hidalgo</text>
<text x="792" y="605.9" font-size="11.7" fill="#4a4a4a" text-anchor="start" textLength="126.4" lengthAdjust="spacingAndGlyphs" >Tel. Ofic. (771) 710 0166</text>
<text x="792" y="622.7" font-size="11.7" fill="#4a4a4a" text-anchor="start" textLength="122.7" lengthAdjust="spacingAndGlyphs" >Tel. Cel. (771) 162 6290</text>
<text x="792" y="657.4" font-size="11.7" fill="#555" text-anchor="start" font-weight="bold" textLength="202" lengthAdjust="spacingAndGlyphs" >Escríbanos, con gusto le atenderemos.</text>
</svg>
<div class="inp" style="top:674.5px;height:33px"></div>
<div class="inp" style="top:728px;height:33px"></div>
<div class="inp" style="top:781.5px;height:33px"></div>
<div class="inp" style="top:834.6px;height:33px"></div>
<div class="inp" style="top:888px;height:144.5px"></div>
<div id="btn"></div>
<svg style="position:absolute;left:0;top:0" width="1200" height="1309">
<text x="809.7" y="694.4" font-size="10.3" fill="#555" text-anchor="start" textLength="37" lengthAdjust="spacingAndGlyphs" >Nombre</text>
<text x="809.7" y="747.9" font-size="10.3" fill="#555" text-anchor="start" textLength="35" lengthAdjust="spacingAndGlyphs" >Asunto</text>
<text x="809.7" y="801.3" font-size="10.3" fill="#555" text-anchor="start" textLength="82" lengthAdjust="spacingAndGlyphs" >Correo Electrónico</text>
<text x="809.7" y="854" font-size="10.3" fill="#555" text-anchor="start" textLength="39" lengthAdjust="spacingAndGlyphs" >Teléfono</text>
<text x="809.7" y="909.7" font-size="10.3" fill="#555" text-anchor="start" textLength="37" lengthAdjust="spacingAndGlyphs" >Mensaje</text>
<path d="M1044 1030 L1049 1025 M1046 1030 L1049 1027" stroke="#888" stroke-width="0.8"/>
<text x="892.2" y="1078.4" font-size="12.3" fill="#333" text-anchor="start" font-weight="bold" textLength="35" lengthAdjust="spacingAndGlyphs" >Enviar</text>
</svg>
<div id="fs"></div>
<div id="zoom"></div>
<div id="attr"></div>
<svg style="position:absolute;left:0;top:0" width="1200" height="1309">
<path d="M1169 343.5 V339 H1173.5 M1178 339 H1182.5 V343.5 M1182.5 348 V352.5 H1178 M1173.5 352.5 H1169 V348" fill="none" stroke="#4a6b72" stroke-width="1.7"/>
<rect x="1168" y="1080.5" width="14" height="3" fill="#4a6b72"/><rect x="1173.5" y="1075" width="3" height="14" fill="#4a6b72"/>
<rect x="1164" y="1099.5" width="22" height="1" fill="#a6d3df"/>
<rect x="1168" y="1115.5" width="14" height="3" fill="#4a6b72"/>
<text x="815" y="1151.2" font-size="8.2" fill="#222" text-anchor="start" textLength="92.7" lengthAdjust="spacingAndGlyphs" >Combinaciones de teclas</text>
<text x="918.3" y="1151.2" font-size="8.2" fill="#222" text-anchor="start" textLength="107.4" lengthAdjust="spacingAndGlyphs" >Datos del mapa ©2024 INEGI</text>
<text x="1036.7" y="1151.2" font-size="8.2" fill="#222" text-anchor="start" textLength="34" lengthAdjust="spacingAndGlyphs" >Términos</text>
<text x="1081" y="1151.2" font-size="8.2" fill="#222" text-anchor="start" textLength="114" lengthAdjust="spacingAndGlyphs" >Notificar un problema de Maps</text>
<rect x="913.3" y="1143" width="1" height="10" fill="#6d9dab"/>
<rect x="1031.7" y="1143" width="1" height="10" fill="#6d9dab"/>
<rect x="1076" y="1143" width="1" height="10" fill="#6d9dab"/>
<text x="8" y="1147.5" font-size="16" textLength="47" lengthAdjust="spacingAndGlyphs" stroke="#c4e2ea" stroke-width="2" paint-order="stroke"><tspan fill="#4a90e2">G</tspan><tspan fill="#e25c5c">o</tspan><tspan fill="#e6b83a">o</tspan><tspan fill="#4a90e2">g</tspan><tspan fill="#3fae5d">l</tspan><tspan fill="#e25c5c">e</tspan></text>
</svg>
<div id="hr"></div>
<div id="footer"></div>
<div class="a" id="copy">© 2016 Duana Services. Powered by Marble</div>
</body></html>
